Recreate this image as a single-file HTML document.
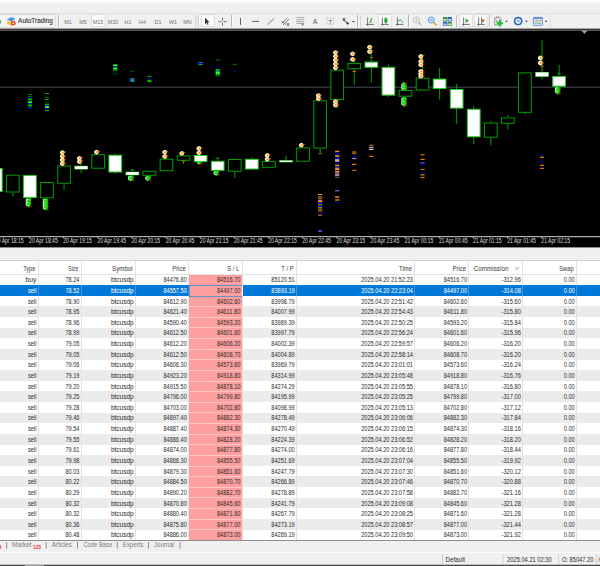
<!DOCTYPE html>
<html lang="en"><head><meta charset="utf-8"><title>Terminal</title>
<style>
html,body{margin:0;padding:0}
body{width:600px;height:566px;background:#f0f0f0;overflow:hidden;position:relative;font-family:"Liberation Sans", sans-serif;-webkit-font-smoothing:antialiased}
.topwhite{position:absolute;left:0;top:0;width:600px;height:2px;background:#fff;border-bottom:1px solid #f8f8f8}
.tbline{position:absolute;left:0;top:12.8px;width:600px;height:0.8px;background:#dedede}
.chartborder{position:absolute;left:0;top:27.9px;width:600px;height:0.9px;background:#a4a4a4}
.chartborder2{position:absolute;left:0;top:28.8px;width:600px;height:1.4px;background:#3a3a3a}
.chartbot{position:absolute;left:0;top:247.3px;width:600px;height:1.1px;background:#8e8e8e}
.hdrline{position:absolute;left:0;top:259.9px;width:600px;height:0.7px;background:#cfcfcf}
.tbl .row{position:absolute;left:0;width:600px}
.tbl .pink{position:absolute;background:#ffa0a0}
.tbl .vsep{position:absolute;top:0;width:1px;height:100%;background:#e2e2e2}
.tabs{position:absolute;left:0;top:540.4px;width:600px;height:11.8px;background:#f0f0f0;border-top:0.8px solid #8e8e8e;overflow:hidden}
.status{position:absolute;left:0;top:552.2px;width:600px;height:12.6px;background:#f0f0f0;border-top:0.8px solid #fcfcfc;overflow:hidden}
.botline{position:absolute;left:0;top:564px;width:600px;height:1px;background:#4a4a4a;border-top:1px solid #c0c0c0}
.botseg{position:absolute;left:25px;top:565px;width:19px;height:1px;background:#9a9a9a}
</style></head><body>
<div class="topwhite"></div>
<div class="tbline"></div>
<svg width="600" height="30" viewBox="0 0 600 30" style="position:absolute;left:0;top:0;display:block">
<rect x="-2" y="14.4" width="57.2" height="13" fill="#f4f4f4" stroke="#cfcfcf" stroke-width="0.7"/>
<rect x="0" y="20" width="1" height="3.4" fill="#48a868"/>
<path d="M7.3 20.2 L11.3 22 L11.3 25.8 L7.3 24 Z" fill="#f2c436"/>
<path d="M11.3 22 L14.9 20.2 L14.9 23.8 L11.3 25.8 Z" fill="#dca41e"/>
<path d="M7 19.2 L11.1 16.7 L15.3 18.5 L11.3 21.4 Z" fill="#3c88d8"/>
<path d="M8.4 19 L11.1 17.5 L13.4 18.4" fill="none" stroke="#a8d8ff" stroke-width="0.8"/>
<circle cx="13.3" cy="23.3" r="2.3" fill="#e23a22"/>
<rect x="12.5" y="22.6" width="1.6" height="1.5" fill="#fff"/>
<text x="18.1" y="23.0" font-size="6.6" fill="#3c3c3c" stroke="#3c3c3c" stroke-width="0.15" textLength="34.8" lengthAdjust="spacingAndGlyphs">AutoTrading</text>
<rect x="58.20" y="15" width="0.9" height="12" fill="#a8a8a8"/>
<rect x="59.10" y="15" width="0.8" height="12" fill="#ffffff"/>
<rect x="91.4" y="14.8" width="13.6" height="12" fill="#fbfbfb" stroke="#cacaca" stroke-width="0.5"/>
<text x="68" y="23.7" font-size="5.4" fill="#707070" text-anchor="middle">M1</text>
<text x="83" y="23.7" font-size="5.4" fill="#707070" text-anchor="middle">M5</text>
<text x="98" y="23.7" font-size="5.4" fill="#707070" text-anchor="middle">M15</text>
<text x="113" y="23.7" font-size="5.4" fill="#707070" text-anchor="middle">M30</text>
<text x="128" y="23.7" font-size="5.4" fill="#707070" text-anchor="middle">H1</text>
<text x="142.5" y="23.7" font-size="5.4" fill="#707070" text-anchor="middle">H4</text>
<text x="158" y="23.7" font-size="5.4" fill="#707070" text-anchor="middle">D1</text>
<text x="173" y="23.7" font-size="5.4" fill="#707070" text-anchor="middle">W1</text>
<text x="187.5" y="23.7" font-size="5.4" fill="#707070" text-anchor="middle">MN</text>
<rect x="195.4" y="15" width="0.8" height="12" fill="#c8c8c8"/>
<rect x="197.80" y="15" width="0.9" height="12" fill="#a8a8a8"/>
<rect x="198.70" y="15" width="0.8" height="12" fill="#ffffff"/>
<rect x="201.4" y="14.8" width="12.8" height="12" fill="#fbfbfb" stroke="#cacaca" stroke-width="0.5"/>
<path d="M205 17.8 L205 24.2 L206.6 22.8 L207.6 25 L208.5 24.6 L207.5 22.5 L209.4 22.3 Z" fill="#303030"/>
<path d="M222.5 17.8 V20.7 M222.5 22.7 V25.6 M218.4 21.7 H221.5 M223.5 21.7 H226.6" stroke="#484848" stroke-width="0.75" fill="none"/>
<rect x="231.00" y="15" width="0.9" height="12" fill="#a8a8a8"/>
<rect x="231.90" y="15" width="0.8" height="12" fill="#ffffff"/>
<path d="M240.5 18 V24.8" stroke="#505050" stroke-width="0.9"/>
<path d="M252.2 21.4 H259.2" stroke="#505050" stroke-width="0.9"/>
<path d="M267.5 24.8 L274.2 18.2" stroke="#606060" stroke-width="0.8"/>
<path d="M281.5 23.5 L287.5 17.8 M283 25 L289 19.2 M281.8 21.2 L286 24.6" stroke="#606060" stroke-width="0.8" fill="none"/>
<text x="287" y="26.2" font-size="3.6" fill="#404040" font-weight="bold">E</text>
<path d="M296.3 17.6 H304.2 M296.3 19.7 H304.2 M296.3 21.7 H304.2 M296.3 23.4 H301.5" stroke="#8a8a8a" stroke-width="0.7" fill="none"/>
<text x="301.8" y="26.4" font-size="3.6" fill="#404040" font-weight="bold">F</text>
<text x="313.1" y="23.8" font-size="6.4" fill="#505050">A</text>
<rect x="327.2" y="18.2" width="6.2" height="6.2" fill="none" stroke="#9a9a9a" stroke-width="0.6" stroke-dasharray="0.8 0.8"/>
<text x="328.6" y="23.9" font-size="5.6" fill="#505050">T</text>
<path d="M342.6 19.2 L345.4 19.2 M344 17.8 L344 20.6 M343 20 L348.6 23.4 M346.2 23.4 H349 M347.6 22 V24.8" stroke="#404040" stroke-width="0.9" fill="none"/>
<path d="M352 21 H354.8 L353.4 22.5 Z" fill="#303030"/>
<rect x="357.10" y="15" width="0.9" height="12" fill="#a8a8a8"/>
<rect x="358.00" y="15" width="0.8" height="12" fill="#ffffff"/>
<rect x="359.9" y="15" width="0.8" height="12" fill="#c8c8c8"/>
<path d="M367.6 17.4 V25.6 M365.8 24.4 H373.8" stroke="#505050" stroke-width="0.8" fill="none"/>
<path d="M371 18.4 V22.8 M371 19 H372.4 M369.6 22 H371" stroke="#20a030" stroke-width="0.9" fill="none"/>
<rect x="378.4" y="14.8" width="12.8" height="12" fill="#fbfbfb" stroke="#cacaca" stroke-width="0.5"/>
<path d="M382.4 17.4 V25.6 M380.8 24.4 H388.8" stroke="#505050" stroke-width="0.8" fill="none"/>
<path d="M385.9 17 V24" stroke="#20a030" stroke-width="0.7"/>
<rect x="384.6" y="18.4" width="2.6" height="4.2" rx="0.6" fill="#28b038" stroke="#108020" stroke-width="0.4"/>
<path d="M397.4 17.4 V25.6 M395.8 24.4 H403.4" stroke="#505050" stroke-width="0.8" fill="none"/>
<path d="M397.8 21.8 Q400 17.6 403 22.6" stroke="#20a030" stroke-width="0.9" fill="none"/>
<rect x="408.10" y="15" width="0.9" height="12" fill="#a8a8a8"/>
<rect x="409.00" y="15" width="0.8" height="12" fill="#ffffff"/>
<circle cx="416.4" cy="20" r="3.0" fill="#f4f4f4" stroke="#b4b4b4" stroke-width="0.8"/>
<path d="M415 20 H417.8 M416.4 18.6 V21.4" stroke="#b0b0b0" stroke-width="0.6"/>
<path d="M418.6 22.3 L421.2 25" stroke="#b0b0b0" stroke-width="1.3"/>
<circle cx="431.2" cy="20" r="3.0" fill="#cfe6ff" stroke="#5aa0e4" stroke-width="1"/>
<path d="M429.7 20 H432.7" stroke="#3070c0" stroke-width="0.7"/>
<path d="M433.6 22.4 L436.4 25.2" stroke="#d4a428" stroke-width="1.5"/>
<rect x="443" y="17" width="4.2" height="4.2" fill="#3a9a3a"/>
<rect x="447.6" y="17" width="4.2" height="4.2" fill="#2a60c8"/>
<rect x="443" y="21.6" width="4.2" height="4.2" fill="#2a60c8"/>
<rect x="447.6" y="21.6" width="4.2" height="4.2" fill="#3a9a3a"/>
<rect x="443.7" y="19" width="2.8" height="1.6" fill="#d4f0d0"/><rect x="448.3" y="19" width="2.8" height="1.6" fill="#d0e0ff"/><rect x="443.7" y="23.6" width="2.8" height="1.6" fill="#d0e0ff"/><rect x="448.3" y="23.6" width="2.8" height="1.6" fill="#d4f0d0"/>
<rect x="456.30" y="15" width="0.9" height="12" fill="#a8a8a8"/>
<rect x="457.20" y="15" width="0.8" height="12" fill="#ffffff"/>
<rect x="459.8" y="14.8" width="12.7" height="12" fill="#fbfbfb" stroke="#cacaca" stroke-width="0.5"/>
<path d="M463.6 17.4 V25.6 M462 24.4 H469.8" stroke="#505050" stroke-width="0.8" fill="none"/>
<path d="M465.6 18.6 L468.8 20.8 L465.6 23 Z" fill="#28a838"/>
<rect x="474.3" y="14.8" width="12.7" height="12" fill="#fbfbfb" stroke="#cacaca" stroke-width="0.5"/>
<path d="M478.6 17.4 V25.6 M477 24.4 H485 M481.6 17.4 V24.4" stroke="#505050" stroke-width="0.8" fill="none"/>
<rect x="482.2" y="19.4" width="2" height="2.6" fill="#d85020"/>
<rect x="489.30" y="15" width="0.9" height="12" fill="#a8a8a8"/>
<rect x="490.20" y="15" width="0.8" height="12" fill="#ffffff"/>
<path d="M496.4 16.8 H500 L501.2 18 V23.6 H496.4 Z" fill="#f4f4f4" stroke="#808080" stroke-width="0.6"/>
<path d="M494.8 18 H498.6 L499.8 19.2 V25 H494.8 Z" fill="#fcfcfc" stroke="#606060" stroke-width="0.7"/>
<path d="M496 20.4 L497.2 20.4 L497.2 22.4 M496 22.4 H498.4" stroke="#505050" stroke-width="0.6" fill="none"/>
<path d="M499.9 20.2 V26.6 M496.9 23.4 H502.9" stroke="#1cc430" stroke-width="2.3"/>
<path d="M505 20.8 H507.8 L506.4 22.3 Z" fill="#303030"/>
<circle cx="518.2" cy="21.1" r="4.0" fill="#2c6ccc" stroke="#1f57ae" stroke-width="0.7"/>
<circle cx="518.2" cy="21.1" r="2.8" fill="#d4e6fa"/>
<path d="M517 19.6 L518.4 21.2 H520" stroke="#404858" stroke-width="0.6" fill="none"/>
<path d="M525 20.8 H527.8 L526.4 22.3 Z" fill="#303030"/>
<rect x="533.4" y="17.4" width="9" height="8" rx="0.8" fill="#e2edf9" stroke="#5a8fd6" stroke-width="0.9"/>
<rect x="533.4" y="17.4" width="9" height="1.6" fill="#5a8fd6"/>
<path d="M534.8 21.6 L537 20.4 L539 21.2 L541.2 20.2" stroke="#d05030" stroke-width="0.7" fill="none"/>
<path d="M534.8 23.8 L537 22.8 L539 23.6 L541.2 22.8" stroke="#30a040" stroke-width="0.7" fill="none"/>
<path d="M544.8 20.8 H547.6 L546.2 22.3 Z" fill="#303030"/>
<rect x="550" y="14" width="0.7" height="15" fill="#dcdcdc"/>
</svg>
<div class="chartborder"></div><div class="chartborder2"></div>
<svg class="chart" width="600" height="218.0" viewBox="0 0 600 218.0" style="position:absolute;left:0;top:30.0px;display:block">
<rect x="0" y="0" width="600" height="218.0" fill="#000"/>
<rect x="0" y="0" width="600" height="0.8" fill="#6a6a6a"/>
<rect x="0" y="56.70" width="600" height="1" fill="#454b54"/>
<polygon points="581.2,0.5 587.8,0.5 584.5,3.700000000000003" fill="#98a4b2"/>
<rect x="27.82" y="64.00" width="4.2" height="1.0" fill="#007800"/>
<rect x="27.82" y="66.10" width="4.2" height="1.0" fill="#007800"/>
<rect x="27.82" y="67.10" width="4.2" height="1.0" fill="#0000a0"/>
<rect x="27.82" y="68.40" width="4.2" height="1.6" fill="#00b400"/>
<rect x="27.82" y="70.50" width="4.2" height="1.0" fill="#007800"/>
<rect x="27.82" y="71.40" width="4.2" height="1.8" fill="#20ff40"/>
<rect x="27.82" y="73.30" width="4.2" height="1.0" fill="#0000ff"/>
<rect x="27.82" y="74.40" width="4.2" height="1.6" fill="#00b400"/>
<rect x="27.82" y="76.50" width="4.2" height="1.0" fill="#00b400"/>
<rect x="27.82" y="77.40" width="4.2" height="1.0" fill="#0000ff"/>
<rect x="44.89" y="63.00" width="4.2" height="1.0" fill="#00b400"/>
<rect x="44.89" y="66.80" width="4.2" height="1.0" fill="#007800"/>
<rect x="44.89" y="69.00" width="4.2" height="1.0" fill="#00b400"/>
<rect x="44.89" y="72.25" width="4.2" height="1.5" fill="#004c00"/>
<rect x="44.89" y="74.00" width="4.2" height="1.0" fill="#00b400"/>
<rect x="44.89" y="75.00" width="4.2" height="1.0" fill="#0000ff"/>
<rect x="44.89" y="76.10" width="4.2" height="1.8" fill="#20ff40"/>
<rect x="44.89" y="78.10" width="4.2" height="1.0" fill="#0000ff"/>
<rect x="44.89" y="80.10" width="4.2" height="1.0" fill="#00b400"/>
<rect x="113.17" y="34.40" width="4.2" height="1.6" fill="#20ff40"/>
<rect x="113.17" y="36.50" width="4.2" height="1.0" fill="#0090c0"/>
<rect x="113.17" y="37.75" width="4.2" height="1.5" fill="#20ff40"/>
<rect x="113.17" y="39.20" width="4.2" height="1.6" fill="#00b400"/>
<rect x="113.17" y="43.20" width="4.2" height="1.0" fill="#006000"/>
<rect x="130.24" y="40.70" width="4.2" height="1.0" fill="#006800"/>
<rect x="130.24" y="48.30" width="4.2" height="1.4" fill="#10a0c0"/>
<rect x="130.24" y="49.60" width="4.2" height="1.4" fill="#1080e0"/>
<rect x="130.24" y="50.90" width="4.2" height="1.0" fill="#10a060"/>
<rect x="147.31" y="45.90" width="4.2" height="1.0" fill="#00b400"/>
<rect x="147.31" y="48.20" width="4.2" height="1.0" fill="#0000ff"/>
<rect x="147.31" y="49.80" width="4.2" height="1.2" fill="#00b400"/>
<rect x="147.31" y="50.90" width="4.2" height="1.2" fill="#00b400"/>
<rect x="198.52" y="32.10" width="4.2" height="1.0" fill="#10b060"/>
<rect x="198.52" y="32.90" width="4.2" height="1.2" fill="#0000ff"/>
<rect x="198.52" y="34.00" width="4.2" height="1.0" fill="#10a040"/>
<rect x="215.59" y="29.30" width="4.2" height="1.4" fill="#005800"/>
<rect x="215.59" y="36.90" width="4.2" height="1.0" fill="#0000a0"/>
<rect x="215.59" y="39.00" width="4.2" height="1.4" fill="#00b400"/>
<rect x="215.59" y="40.40" width="4.2" height="1.2" fill="#20c060"/>
<rect x="215.59" y="41.60" width="4.2" height="1.6" fill="#20ff40"/>
<rect x="215.59" y="43.10" width="4.2" height="1.4" fill="#20ff40"/>
<rect x="215.59" y="44.50" width="4.2" height="1.0" fill="#00b400"/>
<rect x="215.59" y="45.80" width="4.2" height="1.0" fill="#006000"/>
<rect x="232.66" y="33.80" width="4.2" height="1.0" fill="#008000"/>
<rect x="232.66" y="40.70" width="4.2" height="1.0" fill="#000090"/>
<rect x="318.01" y="164.00" width="4.2" height="1.0" fill="#ff9800"/>
<rect x="318.01" y="166.30" width="4.2" height="1.4" fill="#9c5a14"/>
<rect x="318.01" y="167.90" width="4.2" height="1.4" fill="#9c5a14"/>
<rect x="318.01" y="169.90" width="4.2" height="1.0" fill="#e08000"/>
<rect x="318.01" y="170.90" width="4.2" height="1.4" fill="#ff9800"/>
<rect x="318.01" y="172.50" width="4.2" height="1.4" fill="#0000ff"/>
<rect x="318.01" y="174.30" width="4.2" height="1.0" fill="#ff9800"/>
<rect x="318.01" y="175.70" width="4.2" height="1.4" fill="#0000ff"/>
<rect x="318.01" y="177.30" width="4.2" height="1.0" fill="#ff9800"/>
<rect x="318.01" y="178.70" width="4.2" height="1.4" fill="#9c5a14"/>
<rect x="318.01" y="180.30" width="4.2" height="1.4" fill="#9c5a14"/>
<rect x="318.01" y="182.70" width="4.2" height="1.4" fill="#0000a0"/>
<rect x="318.01" y="184.50" width="4.2" height="1.4" fill="#9c5a14"/>
<rect x="318.01" y="200.10" width="4.2" height="1.8" fill="#6a40c8"/>
<rect x="335.08" y="120.80" width="4.2" height="1.4" fill="#ff9800"/>
<rect x="335.08" y="122.40" width="4.2" height="1.6" fill="#0000a0"/>
<rect x="335.08" y="124.10" width="4.2" height="1.0" fill="#0000a0"/>
<rect x="335.08" y="125.20" width="4.2" height="1.6" fill="#ff9800"/>
<rect x="335.08" y="127.30" width="4.2" height="1.4" fill="#0000ff"/>
<rect x="335.08" y="128.90" width="4.2" height="1.0" fill="#b090e0"/>
<rect x="335.08" y="129.90" width="4.2" height="1.0" fill="#ffc0a0"/>
<rect x="335.08" y="130.90" width="4.2" height="1.0" fill="#b090e0"/>
<rect x="335.08" y="132.70" width="4.2" height="1.4" fill="#0000a0"/>
<rect x="335.08" y="134.70" width="4.2" height="1.6" fill="#ff9800"/>
<rect x="335.08" y="136.50" width="4.2" height="1.0" fill="#0000ff"/>
<rect x="335.08" y="137.70" width="4.2" height="1.0" fill="#ffc0a0"/>
<rect x="335.08" y="138.90" width="4.2" height="1.2" fill="#ff9800"/>
<rect x="335.08" y="140.90" width="4.2" height="1.2" fill="#ff9800"/>
<rect x="335.08" y="142.30" width="4.2" height="1.0" fill="#b090e0"/>
<rect x="335.08" y="143.70" width="4.2" height="1.0" fill="#ffc0a0"/>
<rect x="335.08" y="144.90" width="4.2" height="1.0" fill="#b090e0"/>
<rect x="335.08" y="146.70" width="4.2" height="1.0" fill="#8060a0"/>
<rect x="335.08" y="160.00" width="4.2" height="1.4" fill="#7060d0"/>
<rect x="335.08" y="166.30" width="4.2" height="1.4" fill="#ff9800"/>
<rect x="335.08" y="169.30" width="4.2" height="1.4" fill="#e08000"/>
<rect x="335.08" y="171.80" width="4.2" height="1.2" fill="#0000a0"/>
<rect x="352.15" y="121.20" width="4.2" height="1.6" fill="#9c5a14"/>
<rect x="352.15" y="122.80" width="4.2" height="1.4" fill="#9c5a14"/>
<rect x="352.15" y="125.80" width="4.2" height="1.4" fill="#0000a0"/>
<rect x="352.15" y="127.90" width="4.2" height="1.2" fill="#b090e0"/>
<rect x="352.15" y="133.80" width="4.2" height="1.2" fill="#e08000"/>
<rect x="352.15" y="139.80" width="4.2" height="1.2" fill="#b86c10"/>
<rect x="369.22" y="114.60" width="4.2" height="1.4" fill="#9c5a14"/>
<rect x="369.22" y="116.70" width="4.2" height="1.4" fill="#b090e0"/>
<rect x="369.22" y="118.80" width="4.2" height="1.2" fill="#ffc0a0"/>
<rect x="369.22" y="125.80" width="4.2" height="1.2" fill="#e08000"/>
<rect x="420.43" y="124.10" width="4.2" height="1.2" fill="#b87010"/>
<rect x="420.43" y="128.80" width="4.2" height="1.2" fill="#e08000"/>
<rect x="420.43" y="132.40" width="4.2" height="1.2" fill="#8070ff"/>
<rect x="420.43" y="133.40" width="4.2" height="1.0" fill="#0000ff"/>
<rect x="420.43" y="138.90" width="4.2" height="1.2" fill="#c07810"/>
<rect x="420.43" y="141.90" width="4.2" height="1.2" fill="#0000a0"/>
<rect x="420.43" y="144.10" width="4.2" height="1.4" fill="#c07810"/>
<rect x="420.43" y="146.90" width="4.2" height="1.2" fill="#e08000"/>
<rect x="539.92" y="124.90" width="4.2" height="1.2" fill="#0000a0"/>
<rect x="539.92" y="126.70" width="4.2" height="1.2" fill="#e08000"/>
<rect x="539.92" y="130.90" width="4.2" height="1.2" fill="#0000a0"/>
<rect x="539.92" y="134.70" width="4.2" height="1.2" fill="#e08000"/>
<rect x="539.92" y="137.80" width="4.2" height="1.2" fill="#c07810"/>
<rect x="-10.57" y="138.50" width="12.7" height="23.00" fill="#fff" stroke="#22d022" stroke-width="1"/>
<rect x="12.35" y="162.50" width="1" height="4.20" fill="#00a000"/>
<rect x="6.50" y="145.20" width="12.7" height="16.80" fill="#000" stroke="#00a000" stroke-width="1"/>
<rect x="23.57" y="145.50" width="12.7" height="22.00" fill="#fff" stroke="#22d022" stroke-width="1"/>
<rect x="40.64" y="152.50" width="12.7" height="15.30" fill="#000" stroke="#00a000" stroke-width="1"/>
<rect x="63.56" y="153.80" width="1" height="5.90" fill="#00a000"/>
<rect x="57.71" y="136.00" width="12.7" height="17.30" fill="#000" stroke="#00a000" stroke-width="1"/>
<rect x="80.63" y="133.00" width="1" height="2.80" fill="#00a000"/>
<rect x="80.63" y="139.50" width="1" height="3.50" fill="#00a000"/>
<rect x="74.28" y="135.80" width="13.7" height="3.70" fill="#22d022"/>
<rect x="74.88" y="136.25" width="12.5" height="2.80" fill="#ffffff"/>
<rect x="91.85" y="124.70" width="12.7" height="13.50" fill="#000" stroke="#00a000" stroke-width="1"/>
<rect x="114.77" y="123.20" width="1" height="1.50" fill="#00a000"/>
<rect x="114.77" y="142.50" width="1" height="1.50" fill="#00a000"/>
<rect x="108.92" y="125.20" width="12.7" height="16.80" fill="#fff" stroke="#22d022" stroke-width="1"/>
<rect x="131.84" y="139.70" width="1" height="2.00" fill="#00a000"/>
<rect x="125.49" y="141.70" width="13.7" height="3.60" fill="#22d022"/>
<rect x="126.09" y="142.15" width="12.5" height="2.70" fill="#ffffff"/>
<rect x="143.06" y="141.30" width="12.7" height="4.00" fill="#000" stroke="#00a000" stroke-width="1"/>
<rect x="160.13" y="129.20" width="12.7" height="11.50" fill="#000" stroke="#00a000" stroke-width="1"/>
<rect x="183.05" y="130.80" width="1" height="3.20" fill="#00a000"/>
<rect x="177.20" y="125.80" width="12.7" height="4.50" fill="#000" stroke="#00a000" stroke-width="1"/>
<rect x="194.27" y="125.50" width="12.7" height="6.00" fill="#fff" stroke="#22d022" stroke-width="1"/>
<rect x="217.19" y="128.00" width="1" height="2.80" fill="#00a000"/>
<rect x="211.34" y="131.30" width="12.7" height="9.00" fill="#fff" stroke="#22d022" stroke-width="1"/>
<rect x="234.26" y="141.70" width="1" height="6.30" fill="#00a000"/>
<rect x="228.41" y="129.50" width="12.7" height="11.70" fill="#000" stroke="#00a000" stroke-width="1"/>
<rect x="251.33" y="127.30" width="1" height="1.50" fill="#00a000"/>
<rect x="245.48" y="129.30" width="12.7" height="9.70" fill="#fff" stroke="#22d022" stroke-width="1"/>
<rect x="262.55" y="131.50" width="12.7" height="5.70" fill="#000" stroke="#00a000" stroke-width="1"/>
<rect x="285.47" y="125.60" width="1" height="4.60" fill="#00a000"/>
<rect x="279.12" y="130.20" width="13.7" height="2.20" fill="#22d022"/>
<rect x="279.72" y="130.65" width="12.5" height="1.30" fill="#ffffff"/>
<rect x="296.69" y="117.90" width="12.7" height="13.30" fill="#000" stroke="#00a000" stroke-width="1"/>
<rect x="319.61" y="118.60" width="1" height="5.40" fill="#00a000"/>
<rect x="313.76" y="70.80" width="12.7" height="47.30" fill="#000" stroke="#00a000" stroke-width="1"/>
<rect x="336.68" y="70.00" width="1" height="8.40" fill="#00a000"/>
<rect x="330.83" y="40.20" width="12.7" height="29.30" fill="#000" stroke="#00a000" stroke-width="1"/>
<rect x="353.75" y="30.50" width="1" height="2.60" fill="#00a000"/>
<rect x="353.75" y="39.30" width="1" height="15.40" fill="#00a000"/>
<rect x="347.90" y="33.60" width="12.7" height="5.20" fill="#000" stroke="#00a000" stroke-width="1"/>
<rect x="370.82" y="15.50" width="1" height="16.10" fill="#00a000"/>
<rect x="370.82" y="37.70" width="1" height="14.80" fill="#00a000"/>
<rect x="364.97" y="32.10" width="12.7" height="5.10" fill="#fff" stroke="#22d022" stroke-width="1"/>
<rect x="387.89" y="34.20" width="1" height="2.70" fill="#00a000"/>
<rect x="387.89" y="65.60" width="1" height="1.40" fill="#00a000"/>
<rect x="382.04" y="37.40" width="12.7" height="27.70" fill="#fff" stroke="#22d022" stroke-width="1"/>
<rect x="399.11" y="60.50" width="12.7" height="5.70" fill="#000" stroke="#00a000" stroke-width="1"/>
<rect x="422.03" y="24.30" width="1" height="23.40" fill="#00a000"/>
<rect x="416.18" y="48.20" width="12.7" height="11.80" fill="#000" stroke="#00a000" stroke-width="1"/>
<rect x="439.10" y="38.00" width="1" height="10.60" fill="#00a000"/>
<rect x="439.10" y="59.00" width="1" height="10.50" fill="#00a000"/>
<rect x="433.25" y="49.10" width="12.7" height="9.40" fill="#fff" stroke="#22d022" stroke-width="1"/>
<rect x="456.17" y="54.00" width="1" height="5.00" fill="#00a000"/>
<rect x="456.17" y="78.60" width="1" height="15.20" fill="#00a000"/>
<rect x="450.32" y="59.50" width="12.7" height="18.60" fill="#fff" stroke="#22d022" stroke-width="1"/>
<rect x="473.24" y="75.50" width="1" height="3.30" fill="#00a000"/>
<rect x="473.24" y="107.30" width="1" height="7.00" fill="#00a000"/>
<rect x="467.39" y="79.30" width="12.7" height="27.50" fill="#fff" stroke="#22d022" stroke-width="1"/>
<rect x="490.31" y="91.00" width="1" height="1.50" fill="#00a000"/>
<rect x="490.31" y="107.70" width="1" height="7.50" fill="#00a000"/>
<rect x="484.46" y="93.00" width="12.7" height="14.20" fill="#000" stroke="#00a000" stroke-width="1"/>
<rect x="507.38" y="85.00" width="1" height="2.40" fill="#00a000"/>
<rect x="507.38" y="93.80" width="1" height="5.50" fill="#00a000"/>
<rect x="501.53" y="87.90" width="12.7" height="5.40" fill="#000" stroke="#00a000" stroke-width="1"/>
<rect x="524.45" y="82.80" width="1" height="1.40" fill="#00a000"/>
<rect x="518.60" y="42.90" width="12.7" height="39.40" fill="#000" stroke="#00a000" stroke-width="1"/>
<rect x="541.52" y="10.00" width="1" height="32.00" fill="#00a000"/>
<rect x="541.52" y="46.80" width="1" height="2.90" fill="#00a000"/>
<rect x="535.17" y="42.00" width="13.7" height="4.80" fill="#22d022"/>
<rect x="535.77" y="42.45" width="12.5" height="3.90" fill="#ffffff"/>
<rect x="558.59" y="34.90" width="1" height="11.10" fill="#00a000"/>
<rect x="552.74" y="46.50" width="12.7" height="9.70" fill="#fff" stroke="#22d022" stroke-width="1"/>
<rect x="130.64" y="139.30" width="3.4" height="1.0" fill="#00a000"/>
<rect x="215.99" y="127.70" width="3.4" height="1.0" fill="#00a000"/>
<rect x="181.85" y="130.50" width="3.4" height="1.0" fill="#c08000"/>
<rect x="318.41" y="123.10" width="3.4" height="1.0" fill="#a06000"/>
<rect x="352.55" y="41.00" width="3.4" height="1.0" fill="#c07800"/>
<rect x="369.62" y="27.10" width="3.4" height="1.0" fill="#a06000"/>
<rect x="353.05" y="29.90" width="2.4" height="1.0" fill="#408000"/>
<polygon points="59.96,122.62 61.06,120.72 62.46,120.22 63.86,120.72 64.86,122.62 63.86,124.53 62.46,125.03 61.06,124.53" fill="#ffe6b4"/>
<polygon points="59.96,126.28 61.06,124.38 62.46,123.88 63.86,124.38 64.86,126.28 63.86,128.18 62.46,128.68 61.06,128.18" fill="#ffe6b4"/>
<polygon points="59.96,129.93 61.06,128.03 62.46,127.53 63.86,128.03 64.86,129.93 63.86,131.83 62.46,132.33 61.06,131.83" fill="#ffe6b4"/>
<polygon points="59.96,133.58 61.06,131.68 62.46,131.18 63.86,131.68 64.86,133.58 63.86,135.48 62.46,135.98 61.06,135.48" fill="#ffe6b4"/>
<rect x="60.06" y="121.42" width="1.2" height="2.4" fill="#ffffff" opacity="0.8"/>
<ellipse cx="62.76" cy="122.62" rx="1.15" ry="1.0" fill="#ff9a18"/>
<rect x="64.26" y="121.42" width="1.7" height="0.7" fill="#e88810" opacity="0.85"/>
<rect x="60.06" y="125.08" width="1.2" height="2.4" fill="#ffffff" opacity="0.8"/>
<ellipse cx="62.76" cy="126.28" rx="1.15" ry="1.0" fill="#ff9a18"/>
<rect x="64.26" y="125.08" width="1.7" height="0.7" fill="#e88810" opacity="0.85"/>
<rect x="64.66" y="126.38" width="1.1" height="1.0" fill="#e02000"/>
<rect x="60.06" y="128.73" width="1.2" height="2.4" fill="#ffffff" opacity="0.8"/>
<ellipse cx="62.76" cy="129.93" rx="1.15" ry="1.0" fill="#ff9a18"/>
<rect x="64.26" y="128.73" width="1.7" height="0.7" fill="#e88810" opacity="0.85"/>
<rect x="63.06" y="130.83" width="1.4" height="0.9" fill="#a0d040"/>
<rect x="60.06" y="132.38" width="1.2" height="2.4" fill="#ffffff" opacity="0.8"/>
<ellipse cx="62.76" cy="133.58" rx="1.15" ry="1.0" fill="#ff9a18"/>
<rect x="64.26" y="132.38" width="1.7" height="0.7" fill="#e88810" opacity="0.85"/>
<rect x="64.66" y="133.68" width="1.1" height="1.0" fill="#e02000"/>
<polygon points="77.03,128.32 78.13,126.42 79.53,125.92 80.93,126.42 81.93,128.32 80.93,130.22 79.53,130.72 78.13,130.22" fill="#ffe6b4"/>
<polygon points="77.03,131.57 78.13,129.67 79.53,129.17 80.93,129.67 81.93,131.57 80.93,133.47 79.53,133.97 78.13,133.47" fill="#ffe6b4"/>
<rect x="77.13" y="127.12" width="1.2" height="2.4" fill="#ffffff" opacity="0.8"/>
<ellipse cx="79.83" cy="128.32" rx="1.15" ry="1.0" fill="#ff9a18"/>
<rect x="81.33" y="127.12" width="1.7" height="0.7" fill="#e88810" opacity="0.85"/>
<rect x="77.13" y="130.38" width="1.2" height="2.4" fill="#ffffff" opacity="0.8"/>
<ellipse cx="79.83" cy="131.57" rx="1.15" ry="1.0" fill="#ff9a18"/>
<rect x="81.33" y="130.38" width="1.7" height="0.7" fill="#e88810" opacity="0.85"/>
<rect x="81.73" y="131.67" width="1.1" height="1.0" fill="#e02000"/>
<polygon points="94.10,122.10 95.20,120.20 96.60,119.70 98.00,120.20 99.00,122.10 98.00,124.00 96.60,124.50 95.20,124.00" fill="#ffe6b4"/>
<rect x="94.20" y="120.90" width="1.2" height="2.4" fill="#ffffff" opacity="0.8"/>
<ellipse cx="96.90" cy="122.10" rx="1.15" ry="1.0" fill="#ff9a18"/>
<rect x="98.40" y="120.90" width="1.7" height="0.7" fill="#e88810" opacity="0.85"/>
<polygon points="162.38,122.18 163.48,120.28 164.88,119.78 166.28,120.28 167.28,122.18 166.28,124.08 164.88,124.58 163.48,124.08" fill="#ffe6b4"/>
<polygon points="162.38,126.52 163.48,124.62 164.88,124.12 166.28,124.62 167.28,126.52 166.28,128.42 164.88,128.92 163.48,128.42" fill="#ffe6b4"/>
<rect x="162.48" y="120.98" width="1.2" height="2.4" fill="#ffffff" opacity="0.8"/>
<ellipse cx="165.18" cy="122.18" rx="1.15" ry="1.0" fill="#ff9a18"/>
<rect x="166.68" y="120.98" width="1.7" height="0.7" fill="#e88810" opacity="0.85"/>
<rect x="162.48" y="125.32" width="1.2" height="2.4" fill="#ffffff" opacity="0.8"/>
<ellipse cx="165.18" cy="126.52" rx="1.15" ry="1.0" fill="#ff9a18"/>
<rect x="166.68" y="125.32" width="1.7" height="0.7" fill="#e88810" opacity="0.85"/>
<rect x="167.08" y="126.62" width="1.1" height="1.0" fill="#e02000"/>
<polygon points="179.45,123.30 180.55,121.40 181.95,120.90 183.35,121.40 184.35,123.30 183.35,125.20 181.95,125.70 180.55,125.20" fill="#ffe6b4"/>
<rect x="179.55" y="122.10" width="1.2" height="2.4" fill="#ffffff" opacity="0.8"/>
<ellipse cx="182.25" cy="123.30" rx="1.15" ry="1.0" fill="#ff9a18"/>
<rect x="183.75" y="122.10" width="1.7" height="0.7" fill="#e88810" opacity="0.85"/>
<polygon points="196.52,118.48 197.62,116.58 199.02,116.08 200.42,116.58 201.42,118.48 200.42,120.38 199.02,120.88 197.62,120.38" fill="#ffe6b4"/>
<polygon points="196.52,122.82 197.62,120.92 199.02,120.42 200.42,120.92 201.42,122.82 200.42,124.72 199.02,125.22 197.62,124.72" fill="#ffe6b4"/>
<rect x="196.62" y="117.28" width="1.2" height="2.4" fill="#ffffff" opacity="0.8"/>
<ellipse cx="199.32" cy="118.48" rx="1.15" ry="1.0" fill="#ff9a18"/>
<rect x="200.82" y="117.28" width="1.7" height="0.7" fill="#e88810" opacity="0.85"/>
<rect x="196.62" y="121.62" width="1.2" height="2.4" fill="#ffffff" opacity="0.8"/>
<ellipse cx="199.32" cy="122.82" rx="1.15" ry="1.0" fill="#ff9a18"/>
<rect x="200.82" y="121.62" width="1.7" height="0.7" fill="#e88810" opacity="0.85"/>
<rect x="201.22" y="122.92" width="1.1" height="1.0" fill="#e02000"/>
<polygon points="264.80,125.52 265.90,123.62 267.30,123.12 268.70,123.62 269.70,125.52 268.70,127.42 267.30,127.92 265.90,127.42" fill="#ffe6b4"/>
<polygon points="264.80,129.18 265.90,127.28 267.30,126.78 268.70,127.28 269.70,129.18 268.70,131.08 267.30,131.58 265.90,131.08" fill="#ffe6b4"/>
<rect x="264.90" y="124.32" width="1.2" height="2.4" fill="#ffffff" opacity="0.8"/>
<ellipse cx="267.60" cy="125.52" rx="1.15" ry="1.0" fill="#ff9a18"/>
<rect x="269.10" y="124.32" width="1.7" height="0.7" fill="#e88810" opacity="0.85"/>
<rect x="264.90" y="127.98" width="1.2" height="2.4" fill="#ffffff" opacity="0.8"/>
<ellipse cx="267.60" cy="129.18" rx="1.15" ry="1.0" fill="#ff9a18"/>
<rect x="269.10" y="127.98" width="1.7" height="0.7" fill="#e88810" opacity="0.85"/>
<rect x="269.50" y="129.28" width="1.1" height="1.0" fill="#e02000"/>
<polygon points="298.94,115.20 300.04,113.30 301.44,112.80 302.84,113.30 303.84,115.20 302.84,117.10 301.44,117.60 300.04,117.10" fill="#ffe6b4"/>
<rect x="299.04" y="114.00" width="1.2" height="2.4" fill="#ffffff" opacity="0.8"/>
<ellipse cx="301.74" cy="115.20" rx="1.15" ry="1.0" fill="#ff9a18"/>
<rect x="303.24" y="114.00" width="1.7" height="0.7" fill="#e88810" opacity="0.85"/>
<polygon points="316.01,65.58 317.11,63.68 318.51,63.18 319.91,63.68 320.91,65.58 319.91,67.48 318.51,67.98 317.11,67.48" fill="#ffe6b4"/>
<polygon points="316.01,68.72 317.11,66.82 318.51,66.32 319.91,66.82 320.91,68.72 319.91,70.62 318.51,71.12 317.11,70.62" fill="#ffe6b4"/>
<rect x="316.11" y="64.38" width="1.2" height="2.4" fill="#ffffff" opacity="0.8"/>
<ellipse cx="318.81" cy="65.58" rx="1.15" ry="1.0" fill="#ff9a18"/>
<rect x="320.31" y="64.38" width="1.7" height="0.7" fill="#e88810" opacity="0.85"/>
<rect x="316.11" y="67.52" width="1.2" height="2.4" fill="#ffffff" opacity="0.8"/>
<ellipse cx="318.81" cy="68.72" rx="1.15" ry="1.0" fill="#ff9a18"/>
<rect x="320.31" y="67.52" width="1.7" height="0.7" fill="#e88810" opacity="0.85"/>
<rect x="320.71" y="68.82" width="1.1" height="1.0" fill="#e02000"/>
<polygon points="333.08,22.60 334.18,20.70 335.58,20.20 336.98,20.70 337.98,22.60 336.98,24.50 335.58,25.00 334.18,24.50" fill="#ffe6b4"/>
<polygon points="333.08,26.40 334.18,24.50 335.58,24.00 336.98,24.50 337.98,26.40 336.98,28.30 335.58,28.80 334.18,28.30" fill="#ffe6b4"/>
<polygon points="333.08,30.20 334.18,28.30 335.58,27.80 336.98,28.30 337.98,30.20 336.98,32.10 335.58,32.60 334.18,32.10" fill="#ffe6b4"/>
<polygon points="333.08,34.00 334.18,32.10 335.58,31.60 336.98,32.10 337.98,34.00 336.98,35.90 335.58,36.40 334.18,35.90" fill="#ffe6b4"/>
<polygon points="333.08,37.80 334.18,35.90 335.58,35.40 336.98,35.90 337.98,37.80 336.98,39.70 335.58,40.20 334.18,39.70" fill="#ffe6b4"/>
<rect x="333.18" y="21.40" width="1.2" height="2.4" fill="#ffffff" opacity="0.8"/>
<ellipse cx="335.88" cy="22.60" rx="1.15" ry="1.0" fill="#ff9a18"/>
<rect x="337.38" y="21.40" width="1.7" height="0.7" fill="#e88810" opacity="0.85"/>
<rect x="333.18" y="25.20" width="1.2" height="2.4" fill="#ffffff" opacity="0.8"/>
<ellipse cx="335.88" cy="26.40" rx="1.15" ry="1.0" fill="#ff9a18"/>
<rect x="337.38" y="25.20" width="1.7" height="0.7" fill="#e88810" opacity="0.85"/>
<rect x="337.78" y="26.50" width="1.1" height="1.0" fill="#e02000"/>
<rect x="333.18" y="29.00" width="1.2" height="2.4" fill="#ffffff" opacity="0.8"/>
<ellipse cx="335.88" cy="30.20" rx="1.15" ry="1.0" fill="#ff9a18"/>
<rect x="337.38" y="29.00" width="1.7" height="0.7" fill="#e88810" opacity="0.85"/>
<rect x="336.18" y="31.10" width="1.4" height="0.9" fill="#a0d040"/>
<rect x="333.18" y="32.80" width="1.2" height="2.4" fill="#ffffff" opacity="0.8"/>
<ellipse cx="335.88" cy="34.00" rx="1.15" ry="1.0" fill="#ff9a18"/>
<rect x="337.38" y="32.80" width="1.7" height="0.7" fill="#e88810" opacity="0.85"/>
<rect x="337.78" y="34.10" width="1.1" height="1.0" fill="#e02000"/>
<rect x="333.18" y="36.60" width="1.2" height="2.4" fill="#ffffff" opacity="0.8"/>
<ellipse cx="335.88" cy="37.80" rx="1.15" ry="1.0" fill="#ff9a18"/>
<rect x="337.38" y="36.60" width="1.7" height="0.7" fill="#e88810" opacity="0.85"/>
<polygon points="333.08,71.80 334.18,69.90 335.58,69.40 336.98,69.90 337.98,71.80 336.98,73.70 335.58,74.20 334.18,73.70" fill="#ffe6b4"/>
<polygon points="333.08,75.00 334.18,73.10 335.58,72.60 336.98,73.10 337.98,75.00 336.98,76.90 335.58,77.40 334.18,76.90" fill="#ffe6b4"/>
<rect x="333.18" y="70.60" width="1.2" height="2.4" fill="#ffffff" opacity="0.8"/>
<ellipse cx="335.88" cy="71.80" rx="1.15" ry="1.0" fill="#ff9a18"/>
<rect x="337.38" y="70.60" width="1.7" height="0.7" fill="#e88810" opacity="0.85"/>
<rect x="333.18" y="73.80" width="1.2" height="2.4" fill="#ffffff" opacity="0.8"/>
<ellipse cx="335.88" cy="75.00" rx="1.15" ry="1.0" fill="#ff9a18"/>
<rect x="337.38" y="73.80" width="1.7" height="0.7" fill="#e88810" opacity="0.85"/>
<rect x="337.78" y="75.10" width="1.1" height="1.0" fill="#e02000"/>
<polygon points="350.15,23.80 351.25,21.90 352.65,21.40 354.05,21.90 355.05,23.80 354.05,25.70 352.65,26.20 351.25,25.70" fill="#ffe6b4"/>
<polygon points="350.15,29.40 351.25,27.50 352.65,27.00 354.05,27.50 355.05,29.40 354.05,31.30 352.65,31.80 351.25,31.30" fill="#ffe6b4"/>
<rect x="350.25" y="22.60" width="1.2" height="2.4" fill="#ffffff" opacity="0.8"/>
<ellipse cx="352.95" cy="23.80" rx="1.15" ry="1.0" fill="#ff9a18"/>
<rect x="354.45" y="22.60" width="1.7" height="0.7" fill="#e88810" opacity="0.85"/>
<rect x="350.25" y="28.20" width="1.2" height="2.4" fill="#ffffff" opacity="0.8"/>
<ellipse cx="352.95" cy="29.40" rx="1.15" ry="1.0" fill="#ff9a18"/>
<rect x="354.45" y="28.20" width="1.7" height="0.7" fill="#e88810" opacity="0.85"/>
<rect x="354.85" y="29.50" width="1.1" height="1.0" fill="#e02000"/>
<polygon points="367.22,17.20 368.32,15.30 369.72,14.80 371.12,15.30 372.12,17.20 371.12,19.10 369.72,19.60 368.32,19.10" fill="#ffe6b4"/>
<polygon points="367.22,21.60 368.32,19.70 369.72,19.20 371.12,19.70 372.12,21.60 371.12,23.50 369.72,24.00 368.32,23.50" fill="#ffe6b4"/>
<rect x="367.32" y="16.00" width="1.2" height="2.4" fill="#ffffff" opacity="0.8"/>
<ellipse cx="370.02" cy="17.20" rx="1.15" ry="1.0" fill="#ff9a18"/>
<rect x="371.52" y="16.00" width="1.7" height="0.7" fill="#e88810" opacity="0.85"/>
<rect x="367.32" y="20.40" width="1.2" height="2.4" fill="#ffffff" opacity="0.8"/>
<ellipse cx="370.02" cy="21.60" rx="1.15" ry="1.0" fill="#ff9a18"/>
<rect x="371.52" y="20.40" width="1.7" height="0.7" fill="#e88810" opacity="0.85"/>
<rect x="371.92" y="21.70" width="1.1" height="1.0" fill="#e02000"/>
<polygon points="418.43,26.50 419.53,24.60 420.93,24.10 422.33,24.60 423.33,26.50 422.33,28.40 420.93,28.90 419.53,28.40" fill="#ffe6b4"/>
<polygon points="418.43,31.40 419.53,29.50 420.93,29.00 422.33,29.50 423.33,31.40 422.33,33.30 420.93,33.80 419.53,33.30" fill="#ffe6b4"/>
<polygon points="418.43,34.90 419.53,33.00 420.93,32.50 422.33,33.00 423.33,34.90 422.33,36.80 420.93,37.30 419.53,36.80" fill="#ffe6b4"/>
<polygon points="418.43,41.30 419.53,39.40 420.93,38.90 422.33,39.40 423.33,41.30 422.33,43.20 420.93,43.70 419.53,43.20" fill="#ffe6b4"/>
<polygon points="418.43,43.80 419.53,41.90 420.93,41.40 422.33,41.90 423.33,43.80 422.33,45.70 420.93,46.20 419.53,45.70" fill="#ffe6b4"/>
<polygon points="418.43,46.20 419.53,44.30 420.93,43.80 422.33,44.30 423.33,46.20 422.33,48.10 420.93,48.60 419.53,48.10" fill="#ffe6b4"/>
<rect x="418.53" y="25.30" width="1.2" height="2.4" fill="#ffffff" opacity="0.8"/>
<ellipse cx="421.23" cy="26.50" rx="1.15" ry="1.0" fill="#ff9a18"/>
<rect x="422.73" y="25.30" width="1.7" height="0.7" fill="#e88810" opacity="0.85"/>
<rect x="418.53" y="30.20" width="1.2" height="2.4" fill="#ffffff" opacity="0.8"/>
<ellipse cx="421.23" cy="31.40" rx="1.15" ry="1.0" fill="#ff9a18"/>
<rect x="422.73" y="30.20" width="1.7" height="0.7" fill="#e88810" opacity="0.85"/>
<rect x="423.13" y="31.50" width="1.1" height="1.0" fill="#e02000"/>
<rect x="418.53" y="33.70" width="1.2" height="2.4" fill="#ffffff" opacity="0.8"/>
<ellipse cx="421.23" cy="34.90" rx="1.15" ry="1.0" fill="#ff9a18"/>
<rect x="422.73" y="33.70" width="1.7" height="0.7" fill="#e88810" opacity="0.85"/>
<rect x="421.53" y="35.80" width="1.4" height="0.9" fill="#a0d040"/>
<rect x="418.53" y="40.10" width="1.2" height="2.4" fill="#ffffff" opacity="0.8"/>
<ellipse cx="421.23" cy="41.30" rx="1.15" ry="1.0" fill="#ff9a18"/>
<rect x="422.73" y="40.10" width="1.7" height="0.7" fill="#e88810" opacity="0.85"/>
<rect x="423.13" y="41.40" width="1.1" height="1.0" fill="#e02000"/>
<rect x="418.53" y="42.60" width="1.2" height="2.4" fill="#ffffff" opacity="0.8"/>
<ellipse cx="421.23" cy="43.80" rx="1.15" ry="1.0" fill="#ff9a18"/>
<rect x="422.73" y="42.60" width="1.7" height="0.7" fill="#e88810" opacity="0.85"/>
<rect x="418.53" y="45.00" width="1.2" height="2.4" fill="#ffffff" opacity="0.8"/>
<ellipse cx="421.23" cy="46.20" rx="1.15" ry="1.0" fill="#ff9a18"/>
<rect x="422.73" y="45.00" width="1.7" height="0.7" fill="#e88810" opacity="0.85"/>
<rect x="423.13" y="46.30" width="1.1" height="1.0" fill="#e02000"/>
<rect x="421.53" y="47.10" width="1.4" height="0.9" fill="#a0d040"/>
<polygon points="537.92,28.00 539.02,26.10 540.42,25.60 541.82,26.10 542.82,28.00 541.82,29.90 540.42,30.40 539.02,29.90" fill="#ffe6b4"/>
<polygon points="537.92,33.00 539.02,31.10 540.42,30.60 541.82,31.10 542.82,33.00 541.82,34.90 540.42,35.40 539.02,34.90" fill="#ffe6b4"/>
<rect x="538.02" y="26.80" width="1.2" height="2.4" fill="#ffffff" opacity="0.8"/>
<ellipse cx="540.72" cy="28.00" rx="1.15" ry="1.0" fill="#ff9a18"/>
<rect x="542.22" y="26.80" width="1.7" height="0.7" fill="#e88810" opacity="0.85"/>
<rect x="538.02" y="31.80" width="1.2" height="2.4" fill="#ffffff" opacity="0.8"/>
<ellipse cx="540.72" cy="33.00" rx="1.15" ry="1.0" fill="#ff9a18"/>
<rect x="542.22" y="31.80" width="1.7" height="0.7" fill="#e88810" opacity="0.85"/>
<rect x="542.62" y="33.10" width="1.1" height="1.0" fill="#e02000"/>
<rect x="540.52" y="35.90" width="3.0" height="0.8" fill="#e08a10"/>
<rect x="540.52" y="39.60" width="3.0" height="0.8" fill="#7a4a00"/>
<rect x="557.39" y="43.05" width="3.4" height="0.9" fill="#00a000"/>
<polygon points="25.72,169.10 27.12,168.50 27.12,176.30 28.12,177.50 25.72,175.30" fill="#f4fff4" opacity="0.92"/>
<polygon points="26.82,168.30 31.02,168.30 31.02,175.10 28.52,177.30 26.62,175.30" fill="#10e418"/>
<rect x="27.12" y="168.93" width="1.6" height="1.0" fill="#7dff88"/>
<rect x="30.22" y="169.63" width="1.4" height="1.0" fill="#d83000"/>
<rect x="27.92" y="170.63" width="2.2" height="0.6" fill="#b08000" opacity="0.8"/>
<rect x="28.82" y="168.53" width="2.2" height="0.6" fill="#009000" opacity="0.7"/>
<rect x="27.12" y="172.00" width="1.6" height="1.0" fill="#7dff88"/>
<rect x="30.22" y="172.70" width="1.4" height="1.0" fill="#d83000"/>
<rect x="28.82" y="171.60" width="2.2" height="0.6" fill="#009000" opacity="0.7"/>
<rect x="27.12" y="175.07" width="1.6" height="1.0" fill="#7dff88"/>
<rect x="30.22" y="175.77" width="1.4" height="1.0" fill="#d83000"/>
<rect x="27.92" y="176.77" width="2.2" height="0.6" fill="#b08000" opacity="0.8"/>
<rect x="28.82" y="174.67" width="2.2" height="0.6" fill="#009000" opacity="0.7"/>
<polygon points="42.79,169.30 44.19,168.70 44.19,179.60 45.19,180.80 42.79,178.60" fill="#f4fff4" opacity="0.92"/>
<polygon points="43.89,168.50 48.09,168.50 48.09,178.40 45.59,180.60 43.69,178.60" fill="#10e418"/>
<rect x="44.19" y="169.14" width="1.6" height="1.0" fill="#7dff88"/>
<rect x="47.29" y="169.84" width="1.4" height="1.0" fill="#d83000"/>
<rect x="44.99" y="170.84" width="2.2" height="0.6" fill="#b08000" opacity="0.8"/>
<rect x="45.89" y="168.74" width="2.2" height="0.6" fill="#009000" opacity="0.7"/>
<rect x="44.19" y="172.21" width="1.6" height="1.0" fill="#7dff88"/>
<rect x="47.29" y="172.91" width="1.4" height="1.0" fill="#d83000"/>
<rect x="45.89" y="171.81" width="2.2" height="0.6" fill="#009000" opacity="0.7"/>
<rect x="44.19" y="175.29" width="1.6" height="1.0" fill="#7dff88"/>
<rect x="47.29" y="175.99" width="1.4" height="1.0" fill="#d83000"/>
<rect x="44.99" y="176.99" width="2.2" height="0.6" fill="#b08000" opacity="0.8"/>
<rect x="45.89" y="174.89" width="2.2" height="0.6" fill="#009000" opacity="0.7"/>
<rect x="44.19" y="178.36" width="1.6" height="1.0" fill="#7dff88"/>
<rect x="47.29" y="179.06" width="1.4" height="1.0" fill="#d83000"/>
<rect x="45.89" y="177.96" width="2.2" height="0.6" fill="#009000" opacity="0.7"/>
<polygon points="128.14,146.30 129.54,145.70 129.54,150.50 130.54,151.70 128.14,149.50" fill="#f4fff4" opacity="0.92"/>
<polygon points="129.24,145.50 133.44,145.50 133.44,149.30 130.94,151.50 129.04,149.50" fill="#10e418"/>
<rect x="129.54" y="146.15" width="1.6" height="1.0" fill="#7dff88"/>
<rect x="132.64" y="146.85" width="1.4" height="1.0" fill="#d83000"/>
<rect x="130.34" y="147.85" width="2.2" height="0.6" fill="#b08000" opacity="0.8"/>
<rect x="131.24" y="145.75" width="2.2" height="0.6" fill="#009000" opacity="0.7"/>
<rect x="129.54" y="149.25" width="1.6" height="1.0" fill="#7dff88"/>
<rect x="132.64" y="149.95" width="1.4" height="1.0" fill="#d83000"/>
<rect x="131.24" y="148.85" width="2.2" height="0.6" fill="#009000" opacity="0.7"/>
<polygon points="145.21,146.80 146.61,146.20 146.61,150.30 147.61,151.50 145.21,149.30" fill="#f4fff4" opacity="0.92"/>
<polygon points="146.31,146.00 150.51,146.00 150.51,149.10 148.01,151.30 146.11,149.30" fill="#10e418"/>
<rect x="146.61" y="146.47" width="1.6" height="1.0" fill="#7dff88"/>
<rect x="149.71" y="147.18" width="1.4" height="1.0" fill="#d83000"/>
<rect x="147.41" y="148.18" width="2.2" height="0.6" fill="#b08000" opacity="0.8"/>
<rect x="148.31" y="146.07" width="2.2" height="0.6" fill="#009000" opacity="0.7"/>
<rect x="146.61" y="149.22" width="1.6" height="1.0" fill="#7dff88"/>
<rect x="149.71" y="149.93" width="1.4" height="1.0" fill="#d83000"/>
<rect x="148.31" y="148.82" width="2.2" height="0.6" fill="#009000" opacity="0.7"/>
<polygon points="196.42,132.80 197.82,132.20 197.82,133.60 198.82,134.80 196.42,132.60" fill="#f4fff4" opacity="0.92"/>
<polygon points="197.52,132.00 201.72,132.00 201.72,132.40 199.22,134.60 197.32,132.60" fill="#10e418"/>
<rect x="197.82" y="132.50" width="1.6" height="1.0" fill="#7dff88"/>
<rect x="200.92" y="133.20" width="1.4" height="1.0" fill="#d83000"/>
<rect x="198.62" y="134.20" width="2.2" height="0.6" fill="#b08000" opacity="0.8"/>
<rect x="199.52" y="132.10" width="2.2" height="0.6" fill="#009000" opacity="0.7"/>
<polygon points="213.49,141.80 214.89,141.20 214.89,145.10 215.89,146.30 213.49,144.10" fill="#f4fff4" opacity="0.92"/>
<polygon points="214.59,141.00 218.79,141.00 218.79,143.90 216.29,146.10 214.39,144.10" fill="#10e418"/>
<rect x="214.89" y="141.42" width="1.6" height="1.0" fill="#7dff88"/>
<rect x="217.99" y="142.12" width="1.4" height="1.0" fill="#d83000"/>
<rect x="215.69" y="143.12" width="2.2" height="0.6" fill="#b08000" opacity="0.8"/>
<rect x="216.59" y="141.02" width="2.2" height="0.6" fill="#009000" opacity="0.7"/>
<rect x="214.89" y="144.08" width="1.6" height="1.0" fill="#7dff88"/>
<rect x="217.99" y="144.78" width="1.4" height="1.0" fill="#d83000"/>
<rect x="216.59" y="143.68" width="2.2" height="0.6" fill="#009000" opacity="0.7"/>
<polygon points="401.26,59.40 402.66,60.00 402.66,53.20 403.66,52.00 401.26,54.20" fill="#f4fff4" opacity="0.92"/>
<polygon points="402.36,60.00 406.56,60.00 406.56,54.40 404.06,52.20 402.16,54.20" fill="#10e418"/>
<rect x="402.66" y="52.43" width="1.6" height="1.0" fill="#7dff88"/>
<rect x="405.76" y="53.13" width="1.4" height="1.0" fill="#d83000"/>
<rect x="403.46" y="54.13" width="2.2" height="0.6" fill="#b08000" opacity="0.8"/>
<rect x="404.36" y="52.03" width="2.2" height="0.6" fill="#009000" opacity="0.7"/>
<rect x="402.66" y="55.10" width="1.6" height="1.0" fill="#7dff88"/>
<rect x="405.76" y="55.80" width="1.4" height="1.0" fill="#d83000"/>
<rect x="404.36" y="54.70" width="2.2" height="0.6" fill="#009000" opacity="0.7"/>
<rect x="402.66" y="57.77" width="1.6" height="1.0" fill="#7dff88"/>
<rect x="405.76" y="58.47" width="1.4" height="1.0" fill="#d83000"/>
<rect x="403.46" y="59.47" width="2.2" height="0.6" fill="#b08000" opacity="0.8"/>
<rect x="404.36" y="57.37" width="2.2" height="0.6" fill="#009000" opacity="0.7"/>
<polygon points="401.26,68.00 402.66,67.40 402.66,75.50 403.66,76.70 401.26,74.50" fill="#f4fff4" opacity="0.92"/>
<polygon points="402.36,67.20 406.56,67.20 406.56,74.30 404.06,76.50 402.16,74.50" fill="#10e418"/>
<rect x="402.66" y="67.88" width="1.6" height="1.0" fill="#7dff88"/>
<rect x="405.76" y="68.58" width="1.4" height="1.0" fill="#d83000"/>
<rect x="403.46" y="69.58" width="2.2" height="0.6" fill="#b08000" opacity="0.8"/>
<rect x="404.36" y="67.48" width="2.2" height="0.6" fill="#009000" opacity="0.7"/>
<rect x="402.66" y="71.05" width="1.6" height="1.0" fill="#7dff88"/>
<rect x="405.76" y="71.75" width="1.4" height="1.0" fill="#d83000"/>
<rect x="404.36" y="70.65" width="2.2" height="0.6" fill="#009000" opacity="0.7"/>
<rect x="402.66" y="74.22" width="1.6" height="1.0" fill="#7dff88"/>
<rect x="405.76" y="74.92" width="1.4" height="1.0" fill="#d83000"/>
<rect x="403.46" y="75.92" width="2.2" height="0.6" fill="#b08000" opacity="0.8"/>
<rect x="404.36" y="73.82" width="2.2" height="0.6" fill="#009000" opacity="0.7"/>
<polygon points="554.89,57.80 556.29,57.20 556.29,63.30 557.29,64.50 554.89,62.30" fill="#f4fff4" opacity="0.92"/>
<polygon points="555.99,57.00 560.19,57.00 560.19,62.10 557.69,64.30 555.79,62.30" fill="#10e418"/>
<rect x="556.29" y="57.35" width="1.6" height="1.0" fill="#7dff88"/>
<rect x="559.39" y="58.05" width="1.4" height="1.0" fill="#d83000"/>
<rect x="557.09" y="59.05" width="2.2" height="0.6" fill="#b08000" opacity="0.8"/>
<rect x="557.99" y="56.95" width="2.2" height="0.6" fill="#009000" opacity="0.7"/>
<rect x="556.29" y="59.85" width="1.6" height="1.0" fill="#7dff88"/>
<rect x="559.39" y="60.55" width="1.4" height="1.0" fill="#d83000"/>
<rect x="557.99" y="59.45" width="2.2" height="0.6" fill="#009000" opacity="0.7"/>
<rect x="556.29" y="62.35" width="1.6" height="1.0" fill="#7dff88"/>
<rect x="559.39" y="63.05" width="1.4" height="1.0" fill="#d83000"/>
<rect x="557.09" y="64.05" width="2.2" height="0.6" fill="#b08000" opacity="0.8"/>
<rect x="557.99" y="61.95" width="2.2" height="0.6" fill="#009000" opacity="0.7"/>
<rect x="0" y="206.20" width="600" height="1" fill="#d8d8d8"/>
<rect x="-5.25" y="207.00" width="1" height="1.0" fill="#c0c0c0"/>
<text x="-5.05" y="213.30" font-size="6.3" fill="#dedede" textLength="28.6" lengthAdjust="spacingAndGlyphs">20 Apr 18:15</text>
<rect x="28.90" y="207.00" width="1" height="1.0" fill="#c0c0c0"/>
<text x="29.10" y="213.30" font-size="6.3" fill="#dedede" textLength="28.6" lengthAdjust="spacingAndGlyphs">20 Apr 18:45</text>
<rect x="63.05" y="207.00" width="1" height="1.0" fill="#c0c0c0"/>
<text x="63.25" y="213.30" font-size="6.3" fill="#dedede" textLength="28.6" lengthAdjust="spacingAndGlyphs">20 Apr 19:15</text>
<rect x="97.20" y="207.00" width="1" height="1.0" fill="#c0c0c0"/>
<text x="97.40" y="213.30" font-size="6.3" fill="#dedede" textLength="28.6" lengthAdjust="spacingAndGlyphs">20 Apr 19:45</text>
<rect x="131.35" y="207.00" width="1" height="1.0" fill="#c0c0c0"/>
<text x="131.55" y="213.30" font-size="6.3" fill="#dedede" textLength="28.6" lengthAdjust="spacingAndGlyphs">20 Apr 20:15</text>
<rect x="165.50" y="207.00" width="1" height="1.0" fill="#c0c0c0"/>
<text x="165.70" y="213.30" font-size="6.3" fill="#dedede" textLength="28.6" lengthAdjust="spacingAndGlyphs">20 Apr 20:45</text>
<rect x="199.65" y="207.00" width="1" height="1.0" fill="#c0c0c0"/>
<text x="199.85" y="213.30" font-size="6.3" fill="#dedede" textLength="28.6" lengthAdjust="spacingAndGlyphs">20 Apr 21:15</text>
<rect x="233.80" y="207.00" width="1" height="1.0" fill="#c0c0c0"/>
<text x="234.00" y="213.30" font-size="6.3" fill="#dedede" textLength="28.6" lengthAdjust="spacingAndGlyphs">20 Apr 21:45</text>
<rect x="267.95" y="207.00" width="1" height="1.0" fill="#c0c0c0"/>
<text x="268.15" y="213.30" font-size="6.3" fill="#dedede" textLength="28.6" lengthAdjust="spacingAndGlyphs">20 Apr 22:15</text>
<rect x="302.10" y="207.00" width="1" height="1.0" fill="#c0c0c0"/>
<text x="302.30" y="213.30" font-size="6.3" fill="#dedede" textLength="28.6" lengthAdjust="spacingAndGlyphs">20 Apr 22:45</text>
<rect x="336.25" y="207.00" width="1" height="1.0" fill="#c0c0c0"/>
<text x="336.45" y="213.30" font-size="6.3" fill="#dedede" textLength="28.6" lengthAdjust="spacingAndGlyphs">20 Apr 23:15</text>
<rect x="370.40" y="207.00" width="1" height="1.0" fill="#c0c0c0"/>
<text x="370.60" y="213.30" font-size="6.3" fill="#dedede" textLength="28.6" lengthAdjust="spacingAndGlyphs">20 Apr 23:45</text>
<rect x="404.55" y="207.00" width="1" height="1.0" fill="#c0c0c0"/>
<text x="404.75" y="213.30" font-size="6.3" fill="#dedede" textLength="28.6" lengthAdjust="spacingAndGlyphs">21 Apr 00:15</text>
<rect x="438.70" y="207.00" width="1" height="1.0" fill="#c0c0c0"/>
<text x="438.90" y="213.30" font-size="6.3" fill="#dedede" textLength="28.6" lengthAdjust="spacingAndGlyphs">21 Apr 00:45</text>
<rect x="472.85" y="207.00" width="1" height="1.0" fill="#c0c0c0"/>
<text x="473.05" y="213.30" font-size="6.3" fill="#dedede" textLength="28.6" lengthAdjust="spacingAndGlyphs">21 Apr 01:15</text>
<rect x="507.00" y="207.00" width="1" height="1.0" fill="#c0c0c0"/>
<text x="507.20" y="213.30" font-size="6.3" fill="#dedede" textLength="28.6" lengthAdjust="spacingAndGlyphs">21 Apr 01:45</text>
<rect x="541.15" y="207.00" width="1" height="1.0" fill="#c0c0c0"/>
<text x="541.35" y="213.30" font-size="6.3" fill="#dedede" textLength="28.6" lengthAdjust="spacingAndGlyphs">21 Apr 02:15</text>
</svg>
<div class="chartbot"></div><div class="hdrline"></div>
<div class="tbl" style="position:absolute;left:0;top:260.5px;width:600px;height:279.75px;background:#fff;overflow:hidden">
<div class="row" style="top:14.00px;height:10.63px;background:#ffffff"></div>
<div class="row" style="top:24.63px;height:10.63px;background:#0078d7"></div>
<div class="row" style="top:35.26px;height:10.63px;background:#ffffff"></div>
<div class="row" style="top:45.89px;height:10.63px;background:#ebebeb"></div>
<div class="row" style="top:56.52px;height:10.63px;background:#ffffff"></div>
<div class="row" style="top:67.15px;height:10.63px;background:#ebebeb"></div>
<div class="row" style="top:77.78px;height:10.63px;background:#ffffff"></div>
<div class="row" style="top:88.41px;height:10.63px;background:#ebebeb"></div>
<div class="row" style="top:99.04px;height:10.63px;background:#ffffff"></div>
<div class="row" style="top:109.67px;height:10.63px;background:#ebebeb"></div>
<div class="row" style="top:120.30px;height:10.63px;background:#ffffff"></div>
<div class="row" style="top:130.93px;height:10.63px;background:#ebebeb"></div>
<div class="row" style="top:141.56px;height:10.63px;background:#ffffff"></div>
<div class="row" style="top:152.19px;height:10.63px;background:#ebebeb"></div>
<div class="row" style="top:162.82px;height:10.63px;background:#ffffff"></div>
<div class="row" style="top:173.45px;height:10.63px;background:#ebebeb"></div>
<div class="row" style="top:184.08px;height:10.63px;background:#ffffff"></div>
<div class="row" style="top:194.71px;height:10.63px;background:#ebebeb"></div>
<div class="row" style="top:205.34px;height:10.63px;background:#ffffff"></div>
<div class="row" style="top:215.97px;height:10.63px;background:#ebebeb"></div>
<div class="row" style="top:226.60px;height:10.63px;background:#ffffff"></div>
<div class="row" style="top:237.23px;height:10.63px;background:#ebebeb"></div>
<div class="row" style="top:247.86px;height:10.63px;background:#ffffff"></div>
<div class="row" style="top:258.49px;height:10.63px;background:#ebebeb"></div>
<div class="row" style="top:269.12px;height:10.63px;background:#ffffff"></div>
<div class="pink" style="left:189.00px;top:14.00px;width:53.00px;height:265.75px"></div>
<div style="position:absolute;left:189.00px;top:24.38px;width:53.00px;height:0.5px;background:#ffc4c4"></div>
<div style="position:absolute;left:189.00px;top:35.01px;width:53.00px;height:0.5px;background:#ffc4c4"></div>
<div style="position:absolute;left:189.00px;top:45.64px;width:53.00px;height:0.5px;background:#ffc4c4"></div>
<div style="position:absolute;left:189.00px;top:56.27px;width:53.00px;height:0.5px;background:#ffc4c4"></div>
<div style="position:absolute;left:189.00px;top:66.90px;width:53.00px;height:0.5px;background:#ffc4c4"></div>
<div style="position:absolute;left:189.00px;top:77.53px;width:53.00px;height:0.5px;background:#ffc4c4"></div>
<div style="position:absolute;left:189.00px;top:88.16px;width:53.00px;height:0.5px;background:#ffc4c4"></div>
<div style="position:absolute;left:189.00px;top:98.79px;width:53.00px;height:0.5px;background:#ffc4c4"></div>
<div style="position:absolute;left:189.00px;top:109.42px;width:53.00px;height:0.5px;background:#ffc4c4"></div>
<div style="position:absolute;left:189.00px;top:120.05px;width:53.00px;height:0.5px;background:#ffc4c4"></div>
<div style="position:absolute;left:189.00px;top:130.68px;width:53.00px;height:0.5px;background:#ffc4c4"></div>
<div style="position:absolute;left:189.00px;top:141.31px;width:53.00px;height:0.5px;background:#ffc4c4"></div>
<div style="position:absolute;left:189.00px;top:151.94px;width:53.00px;height:0.5px;background:#ffc4c4"></div>
<div style="position:absolute;left:189.00px;top:162.57px;width:53.00px;height:0.5px;background:#ffc4c4"></div>
<div style="position:absolute;left:189.00px;top:173.20px;width:53.00px;height:0.5px;background:#ffc4c4"></div>
<div style="position:absolute;left:189.00px;top:183.83px;width:53.00px;height:0.5px;background:#ffc4c4"></div>
<div style="position:absolute;left:189.00px;top:194.46px;width:53.00px;height:0.5px;background:#ffc4c4"></div>
<div style="position:absolute;left:189.00px;top:205.09px;width:53.00px;height:0.5px;background:#ffc4c4"></div>
<div style="position:absolute;left:189.00px;top:215.72px;width:53.00px;height:0.5px;background:#ffc4c4"></div>
<div style="position:absolute;left:189.00px;top:226.35px;width:53.00px;height:0.5px;background:#ffc4c4"></div>
<div style="position:absolute;left:189.00px;top:236.98px;width:53.00px;height:0.5px;background:#ffc4c4"></div>
<div style="position:absolute;left:189.00px;top:247.61px;width:53.00px;height:0.5px;background:#ffc4c4"></div>
<div style="position:absolute;left:189.00px;top:258.24px;width:53.00px;height:0.5px;background:#ffc4c4"></div>
<div style="position:absolute;left:189.00px;top:268.87px;width:53.00px;height:0.5px;background:#ffc4c4"></div>
<div style="position:absolute;left:189.00px;top:24.63px;width:52.00px;height:9.63px;border:0.5px solid #6a8fc0;box-sizing:content-box"></div>
<div style="position:absolute;left:0;top:13.40px;width:600px;height:0.6px;background:#e2e2e2"></div>
<div class="vsep" style="left:37.50px"></div>
<div class="vsep" style="left:80.50px"></div>
<div class="vsep" style="left:134.80px"></div>
<div class="vsep" style="left:187.90px"></div>
<div class="vsep" style="left:241.50px"></div>
<div class="vsep" style="left:295.80px"></div>
<div class="vsep" style="left:414.10px"></div>
<div class="vsep" style="left:468.20px"></div>
<div class="vsep" style="left:522.00px"></div>
<div class="vsep" style="left:575.80px"></div>
<div style="position:absolute;left:37.50px;top:24.63px;width:0.8px;height:10.63px;background:#3f92de"></div>
<div style="position:absolute;left:80.50px;top:24.63px;width:0.8px;height:10.63px;background:#3f92de"></div>
<div style="position:absolute;left:134.80px;top:24.63px;width:0.8px;height:10.63px;background:#3f92de"></div>
<div style="position:absolute;left:187.90px;top:24.63px;width:1px;height:10.63px;background:#2f82d6"></div>
<div style="position:absolute;left:241.50px;top:24.63px;width:1px;height:10.63px;background:#eef2fa"></div>
<div style="position:absolute;left:295.80px;top:24.63px;width:0.8px;height:10.63px;background:#3f92de"></div>
<div style="position:absolute;left:414.10px;top:24.63px;width:0.8px;height:10.63px;background:#3f92de"></div>
<div style="position:absolute;left:468.20px;top:24.63px;width:0.8px;height:10.63px;background:#3f92de"></div>
<div style="position:absolute;left:522.00px;top:24.63px;width:0.8px;height:10.63px;background:#3f92de"></div>
<div style="position:absolute;left:575.80px;top:24.63px;width:0.8px;height:10.63px;background:#3f92de"></div>
<svg width="600" height="279.75" viewBox="0 0 600 279.75" style="position:absolute;left:0;top:0;display:block" font-family='"Liberation Sans", sans-serif'>
<text x="35.30" y="9.75" font-size="6.6" fill="#3a3a3a" text-anchor="end" textLength="12.1" lengthAdjust="spacingAndGlyphs">Type</text>
<text x="78.30" y="9.75" font-size="6.6" fill="#3a3a3a" text-anchor="end" textLength="10.0" lengthAdjust="spacingAndGlyphs">Size</text>
<text x="132.60" y="9.75" font-size="6.6" fill="#3a3a3a" text-anchor="end" textLength="20.5" lengthAdjust="spacingAndGlyphs">Symbol</text>
<text x="185.70" y="9.75" font-size="6.6" fill="#3a3a3a" text-anchor="end" textLength="13.5" lengthAdjust="spacingAndGlyphs">Price</text>
<text x="239.30" y="9.75" font-size="6.6" fill="#3a3a3a" text-anchor="end" textLength="12.0" lengthAdjust="spacingAndGlyphs">S / L</text>
<text x="293.60" y="9.75" font-size="6.6" fill="#3a3a3a" text-anchor="end" textLength="12.3" lengthAdjust="spacingAndGlyphs">T / P</text>
<text x="411.90" y="9.75" font-size="6.6" fill="#3a3a3a" text-anchor="end" textLength="12.8" lengthAdjust="spacingAndGlyphs">Time</text>
<text x="466.00" y="9.75" font-size="6.6" fill="#3a3a3a" text-anchor="end" textLength="13.5" lengthAdjust="spacingAndGlyphs">Price</text>
<text x="473.80" y="9.75" font-size="6.6" fill="#3a3a3a" textLength="34.6" lengthAdjust="spacingAndGlyphs">Commission</text>
<path d="M515.2 6.70 H518.8 L517 9.00 Z" fill="none" stroke="#8c8c8c" stroke-width="0.5"/>
<text x="573.60" y="9.75" font-size="6.6" fill="#3a3a3a" text-anchor="end" textLength="14.3" lengthAdjust="spacingAndGlyphs">Swap</text>
<text x="36.40" y="21.30" font-size="7" fill="#2a2a2a" text-anchor="end" textLength="10.8" lengthAdjust="spacingAndGlyphs">buy</text>
<text x="79.40" y="21.30" font-size="7" fill="#2a2a2a" text-anchor="end" textLength="14.0" lengthAdjust="spacingAndGlyphs">78.24</text>
<text x="133.70" y="21.30" font-size="7" fill="#2a2a2a" text-anchor="end" textLength="22.8" lengthAdjust="spacingAndGlyphs">btcusdp</text>
<text x="186.80" y="21.30" font-size="7" fill="#2a2a2a" text-anchor="end" textLength="23.4" lengthAdjust="spacingAndGlyphs">84476.80</text>
<text x="240.40" y="21.30" font-size="7" fill="#2a2a2a" text-anchor="end" textLength="23.4" lengthAdjust="spacingAndGlyphs">84516.70</text>
<text x="294.70" y="21.30" font-size="7" fill="#2a2a2a" text-anchor="end" textLength="23.4" lengthAdjust="spacingAndGlyphs">85120.51</text>
<text x="413.00" y="21.30" font-size="7" fill="#2a2a2a" text-anchor="end" textLength="51.8" lengthAdjust="spacingAndGlyphs">2025.04.20 21:52:23</text>
<text x="467.10" y="21.30" font-size="7" fill="#2a2a2a" text-anchor="end" textLength="23.4" lengthAdjust="spacingAndGlyphs">84516.70</text>
<text x="520.90" y="21.30" font-size="7" fill="#2a2a2a" text-anchor="end" textLength="19.4" lengthAdjust="spacingAndGlyphs">-312.96</text>
<text x="574.70" y="21.30" font-size="7" fill="#2a2a2a" text-anchor="end" textLength="10.9" lengthAdjust="spacingAndGlyphs">0.00</text>
<text x="36.40" y="31.93" font-size="7" fill="#ffffff" text-anchor="end" textLength="8.5" lengthAdjust="spacingAndGlyphs">sell</text>
<text x="79.40" y="31.93" font-size="7" fill="#ffffff" text-anchor="end" textLength="14.0" lengthAdjust="spacingAndGlyphs">78.52</text>
<text x="133.70" y="31.93" font-size="7" fill="#ffffff" text-anchor="end" textLength="22.8" lengthAdjust="spacingAndGlyphs">btcusdp</text>
<text x="186.80" y="31.93" font-size="7" fill="#ffffff" text-anchor="end" textLength="23.4" lengthAdjust="spacingAndGlyphs">84557.50</text>
<text x="240.40" y="31.93" font-size="7" fill="#2a2a2a" text-anchor="end" textLength="23.4" lengthAdjust="spacingAndGlyphs">84497.00</text>
<text x="294.70" y="31.93" font-size="7" fill="#ffffff" text-anchor="end" textLength="23.4" lengthAdjust="spacingAndGlyphs">83893.19</text>
<text x="413.00" y="31.93" font-size="7" fill="#ffffff" text-anchor="end" textLength="51.8" lengthAdjust="spacingAndGlyphs">2025.04.20 22:23:04</text>
<text x="467.10" y="31.93" font-size="7" fill="#ffffff" text-anchor="end" textLength="23.4" lengthAdjust="spacingAndGlyphs">84497.00</text>
<text x="520.90" y="31.93" font-size="7" fill="#ffffff" text-anchor="end" textLength="19.4" lengthAdjust="spacingAndGlyphs">-314.08</text>
<text x="574.70" y="31.93" font-size="7" fill="#ffffff" text-anchor="end" textLength="10.9" lengthAdjust="spacingAndGlyphs">0.00</text>
<text x="36.40" y="42.56" font-size="7" fill="#2a2a2a" text-anchor="end" textLength="8.5" lengthAdjust="spacingAndGlyphs">sell</text>
<text x="79.40" y="42.56" font-size="7" fill="#2a2a2a" text-anchor="end" textLength="14.0" lengthAdjust="spacingAndGlyphs">78.90</text>
<text x="133.70" y="42.56" font-size="7" fill="#2a2a2a" text-anchor="end" textLength="22.8" lengthAdjust="spacingAndGlyphs">btcusdp</text>
<text x="186.80" y="42.56" font-size="7" fill="#2a2a2a" text-anchor="end" textLength="23.4" lengthAdjust="spacingAndGlyphs">84612.90</text>
<text x="240.40" y="42.56" font-size="7" fill="#2a2a2a" text-anchor="end" textLength="23.4" lengthAdjust="spacingAndGlyphs">84602.60</text>
<text x="294.70" y="42.56" font-size="7" fill="#2a2a2a" text-anchor="end" textLength="23.4" lengthAdjust="spacingAndGlyphs">83998.79</text>
<text x="413.00" y="42.56" font-size="7" fill="#2a2a2a" text-anchor="end" textLength="51.8" lengthAdjust="spacingAndGlyphs">2025.04.20 22:51:42</text>
<text x="467.10" y="42.56" font-size="7" fill="#2a2a2a" text-anchor="end" textLength="23.4" lengthAdjust="spacingAndGlyphs">84602.60</text>
<text x="520.90" y="42.56" font-size="7" fill="#2a2a2a" text-anchor="end" textLength="19.4" lengthAdjust="spacingAndGlyphs">-315.60</text>
<text x="574.70" y="42.56" font-size="7" fill="#2a2a2a" text-anchor="end" textLength="10.9" lengthAdjust="spacingAndGlyphs">0.00</text>
<text x="36.40" y="53.19" font-size="7" fill="#2a2a2a" text-anchor="end" textLength="8.5" lengthAdjust="spacingAndGlyphs">sell</text>
<text x="79.40" y="53.19" font-size="7" fill="#2a2a2a" text-anchor="end" textLength="14.0" lengthAdjust="spacingAndGlyphs">78.95</text>
<text x="133.70" y="53.19" font-size="7" fill="#2a2a2a" text-anchor="end" textLength="22.8" lengthAdjust="spacingAndGlyphs">btcusdp</text>
<text x="186.80" y="53.19" font-size="7" fill="#2a2a2a" text-anchor="end" textLength="23.4" lengthAdjust="spacingAndGlyphs">84621.40</text>
<text x="240.40" y="53.19" font-size="7" fill="#2a2a2a" text-anchor="end" textLength="23.4" lengthAdjust="spacingAndGlyphs">84611.80</text>
<text x="294.70" y="53.19" font-size="7" fill="#2a2a2a" text-anchor="end" textLength="23.4" lengthAdjust="spacingAndGlyphs">84007.99</text>
<text x="413.00" y="53.19" font-size="7" fill="#2a2a2a" text-anchor="end" textLength="51.8" lengthAdjust="spacingAndGlyphs">2025.04.20 22:54:43</text>
<text x="467.10" y="53.19" font-size="7" fill="#2a2a2a" text-anchor="end" textLength="23.4" lengthAdjust="spacingAndGlyphs">84611.80</text>
<text x="520.90" y="53.19" font-size="7" fill="#2a2a2a" text-anchor="end" textLength="19.4" lengthAdjust="spacingAndGlyphs">-315.80</text>
<text x="574.70" y="53.19" font-size="7" fill="#2a2a2a" text-anchor="end" textLength="10.9" lengthAdjust="spacingAndGlyphs">0.00</text>
<text x="36.40" y="63.82" font-size="7" fill="#2a2a2a" text-anchor="end" textLength="8.5" lengthAdjust="spacingAndGlyphs">sell</text>
<text x="79.40" y="63.82" font-size="7" fill="#2a2a2a" text-anchor="end" textLength="14.0" lengthAdjust="spacingAndGlyphs">78.96</text>
<text x="133.70" y="63.82" font-size="7" fill="#2a2a2a" text-anchor="end" textLength="22.8" lengthAdjust="spacingAndGlyphs">btcusdp</text>
<text x="186.80" y="63.82" font-size="7" fill="#2a2a2a" text-anchor="end" textLength="23.4" lengthAdjust="spacingAndGlyphs">84590.40</text>
<text x="240.40" y="63.82" font-size="7" fill="#2a2a2a" text-anchor="end" textLength="23.4" lengthAdjust="spacingAndGlyphs">84593.20</text>
<text x="294.70" y="63.82" font-size="7" fill="#2a2a2a" text-anchor="end" textLength="23.4" lengthAdjust="spacingAndGlyphs">83989.39</text>
<text x="413.00" y="63.82" font-size="7" fill="#2a2a2a" text-anchor="end" textLength="51.8" lengthAdjust="spacingAndGlyphs">2025.04.20 22:50:25</text>
<text x="467.10" y="63.82" font-size="7" fill="#2a2a2a" text-anchor="end" textLength="23.4" lengthAdjust="spacingAndGlyphs">84593.20</text>
<text x="520.90" y="63.82" font-size="7" fill="#2a2a2a" text-anchor="end" textLength="19.4" lengthAdjust="spacingAndGlyphs">-315.84</text>
<text x="574.70" y="63.82" font-size="7" fill="#2a2a2a" text-anchor="end" textLength="10.9" lengthAdjust="spacingAndGlyphs">0.00</text>
<text x="36.40" y="74.45" font-size="7" fill="#2a2a2a" text-anchor="end" textLength="8.5" lengthAdjust="spacingAndGlyphs">sell</text>
<text x="79.40" y="74.45" font-size="7" fill="#2a2a2a" text-anchor="end" textLength="14.0" lengthAdjust="spacingAndGlyphs">78.99</text>
<text x="133.70" y="74.45" font-size="7" fill="#2a2a2a" text-anchor="end" textLength="22.8" lengthAdjust="spacingAndGlyphs">btcusdp</text>
<text x="186.80" y="74.45" font-size="7" fill="#2a2a2a" text-anchor="end" textLength="23.4" lengthAdjust="spacingAndGlyphs">84612.50</text>
<text x="240.40" y="74.45" font-size="7" fill="#2a2a2a" text-anchor="end" textLength="23.4" lengthAdjust="spacingAndGlyphs">84601.60</text>
<text x="294.70" y="74.45" font-size="7" fill="#2a2a2a" text-anchor="end" textLength="23.4" lengthAdjust="spacingAndGlyphs">83997.79</text>
<text x="413.00" y="74.45" font-size="7" fill="#2a2a2a" text-anchor="end" textLength="51.8" lengthAdjust="spacingAndGlyphs">2025.04.20 22:56:24</text>
<text x="467.10" y="74.45" font-size="7" fill="#2a2a2a" text-anchor="end" textLength="23.4" lengthAdjust="spacingAndGlyphs">84601.60</text>
<text x="520.90" y="74.45" font-size="7" fill="#2a2a2a" text-anchor="end" textLength="19.4" lengthAdjust="spacingAndGlyphs">-315.96</text>
<text x="574.70" y="74.45" font-size="7" fill="#2a2a2a" text-anchor="end" textLength="10.9" lengthAdjust="spacingAndGlyphs">0.00</text>
<text x="36.40" y="85.08" font-size="7" fill="#2a2a2a" text-anchor="end" textLength="8.5" lengthAdjust="spacingAndGlyphs">sell</text>
<text x="79.40" y="85.08" font-size="7" fill="#2a2a2a" text-anchor="end" textLength="14.0" lengthAdjust="spacingAndGlyphs">79.05</text>
<text x="133.70" y="85.08" font-size="7" fill="#2a2a2a" text-anchor="end" textLength="22.8" lengthAdjust="spacingAndGlyphs">btcusdp</text>
<text x="186.80" y="85.08" font-size="7" fill="#2a2a2a" text-anchor="end" textLength="23.4" lengthAdjust="spacingAndGlyphs">84612.20</text>
<text x="240.40" y="85.08" font-size="7" fill="#2a2a2a" text-anchor="end" textLength="23.4" lengthAdjust="spacingAndGlyphs">84606.20</text>
<text x="294.70" y="85.08" font-size="7" fill="#2a2a2a" text-anchor="end" textLength="23.4" lengthAdjust="spacingAndGlyphs">84002.39</text>
<text x="413.00" y="85.08" font-size="7" fill="#2a2a2a" text-anchor="end" textLength="51.8" lengthAdjust="spacingAndGlyphs">2025.04.20 22:59:57</text>
<text x="467.10" y="85.08" font-size="7" fill="#2a2a2a" text-anchor="end" textLength="23.4" lengthAdjust="spacingAndGlyphs">84606.20</text>
<text x="520.90" y="85.08" font-size="7" fill="#2a2a2a" text-anchor="end" textLength="19.4" lengthAdjust="spacingAndGlyphs">-316.20</text>
<text x="574.70" y="85.08" font-size="7" fill="#2a2a2a" text-anchor="end" textLength="10.9" lengthAdjust="spacingAndGlyphs">0.00</text>
<text x="36.40" y="95.71" font-size="7" fill="#2a2a2a" text-anchor="end" textLength="8.5" lengthAdjust="spacingAndGlyphs">sell</text>
<text x="79.40" y="95.71" font-size="7" fill="#2a2a2a" text-anchor="end" textLength="14.0" lengthAdjust="spacingAndGlyphs">79.05</text>
<text x="133.70" y="95.71" font-size="7" fill="#2a2a2a" text-anchor="end" textLength="22.8" lengthAdjust="spacingAndGlyphs">btcusdp</text>
<text x="186.80" y="95.71" font-size="7" fill="#2a2a2a" text-anchor="end" textLength="23.4" lengthAdjust="spacingAndGlyphs">84612.50</text>
<text x="240.40" y="95.71" font-size="7" fill="#2a2a2a" text-anchor="end" textLength="23.4" lengthAdjust="spacingAndGlyphs">84608.70</text>
<text x="294.70" y="95.71" font-size="7" fill="#2a2a2a" text-anchor="end" textLength="23.4" lengthAdjust="spacingAndGlyphs">84004.89</text>
<text x="413.00" y="95.71" font-size="7" fill="#2a2a2a" text-anchor="end" textLength="51.8" lengthAdjust="spacingAndGlyphs">2025.04.20 22:58:14</text>
<text x="467.10" y="95.71" font-size="7" fill="#2a2a2a" text-anchor="end" textLength="23.4" lengthAdjust="spacingAndGlyphs">84608.70</text>
<text x="520.90" y="95.71" font-size="7" fill="#2a2a2a" text-anchor="end" textLength="19.4" lengthAdjust="spacingAndGlyphs">-316.20</text>
<text x="574.70" y="95.71" font-size="7" fill="#2a2a2a" text-anchor="end" textLength="10.9" lengthAdjust="spacingAndGlyphs">0.00</text>
<text x="36.40" y="106.34" font-size="7" fill="#2a2a2a" text-anchor="end" textLength="8.5" lengthAdjust="spacingAndGlyphs">sell</text>
<text x="79.40" y="106.34" font-size="7" fill="#2a2a2a" text-anchor="end" textLength="14.0" lengthAdjust="spacingAndGlyphs">79.06</text>
<text x="133.70" y="106.34" font-size="7" fill="#2a2a2a" text-anchor="end" textLength="22.8" lengthAdjust="spacingAndGlyphs">btcusdp</text>
<text x="186.80" y="106.34" font-size="7" fill="#2a2a2a" text-anchor="end" textLength="23.4" lengthAdjust="spacingAndGlyphs">84606.30</text>
<text x="240.40" y="106.34" font-size="7" fill="#2a2a2a" text-anchor="end" textLength="23.4" lengthAdjust="spacingAndGlyphs">84573.60</text>
<text x="294.70" y="106.34" font-size="7" fill="#2a2a2a" text-anchor="end" textLength="23.4" lengthAdjust="spacingAndGlyphs">83969.79</text>
<text x="413.00" y="106.34" font-size="7" fill="#2a2a2a" text-anchor="end" textLength="51.8" lengthAdjust="spacingAndGlyphs">2025.04.20 23:01:01</text>
<text x="467.10" y="106.34" font-size="7" fill="#2a2a2a" text-anchor="end" textLength="23.4" lengthAdjust="spacingAndGlyphs">84573.60</text>
<text x="520.90" y="106.34" font-size="7" fill="#2a2a2a" text-anchor="end" textLength="19.4" lengthAdjust="spacingAndGlyphs">-316.24</text>
<text x="574.70" y="106.34" font-size="7" fill="#2a2a2a" text-anchor="end" textLength="10.9" lengthAdjust="spacingAndGlyphs">0.00</text>
<text x="36.40" y="116.97" font-size="7" fill="#2a2a2a" text-anchor="end" textLength="8.5" lengthAdjust="spacingAndGlyphs">sell</text>
<text x="79.40" y="116.97" font-size="7" fill="#2a2a2a" text-anchor="end" textLength="14.0" lengthAdjust="spacingAndGlyphs">79.19</text>
<text x="133.70" y="116.97" font-size="7" fill="#2a2a2a" text-anchor="end" textLength="22.8" lengthAdjust="spacingAndGlyphs">btcusdp</text>
<text x="186.80" y="116.97" font-size="7" fill="#2a2a2a" text-anchor="end" textLength="23.4" lengthAdjust="spacingAndGlyphs">84923.20</text>
<text x="240.40" y="116.97" font-size="7" fill="#2a2a2a" text-anchor="end" textLength="23.4" lengthAdjust="spacingAndGlyphs">84918.80</text>
<text x="294.70" y="116.97" font-size="7" fill="#2a2a2a" text-anchor="end" textLength="23.4" lengthAdjust="spacingAndGlyphs">84314.99</text>
<text x="413.00" y="116.97" font-size="7" fill="#2a2a2a" text-anchor="end" textLength="51.8" lengthAdjust="spacingAndGlyphs">2025.04.20 23:05:48</text>
<text x="467.10" y="116.97" font-size="7" fill="#2a2a2a" text-anchor="end" textLength="23.4" lengthAdjust="spacingAndGlyphs">84918.80</text>
<text x="520.90" y="116.97" font-size="7" fill="#2a2a2a" text-anchor="end" textLength="19.4" lengthAdjust="spacingAndGlyphs">-316.76</text>
<text x="574.70" y="116.97" font-size="7" fill="#2a2a2a" text-anchor="end" textLength="10.9" lengthAdjust="spacingAndGlyphs">0.00</text>
<text x="36.40" y="127.60" font-size="7" fill="#2a2a2a" text-anchor="end" textLength="8.5" lengthAdjust="spacingAndGlyphs">sell</text>
<text x="79.40" y="127.60" font-size="7" fill="#2a2a2a" text-anchor="end" textLength="14.0" lengthAdjust="spacingAndGlyphs">79.20</text>
<text x="133.70" y="127.60" font-size="7" fill="#2a2a2a" text-anchor="end" textLength="22.8" lengthAdjust="spacingAndGlyphs">btcusdp</text>
<text x="186.80" y="127.60" font-size="7" fill="#2a2a2a" text-anchor="end" textLength="23.4" lengthAdjust="spacingAndGlyphs">84915.50</text>
<text x="240.40" y="127.60" font-size="7" fill="#2a2a2a" text-anchor="end" textLength="23.4" lengthAdjust="spacingAndGlyphs">84878.10</text>
<text x="294.70" y="127.60" font-size="7" fill="#2a2a2a" text-anchor="end" textLength="23.4" lengthAdjust="spacingAndGlyphs">84274.29</text>
<text x="413.00" y="127.60" font-size="7" fill="#2a2a2a" text-anchor="end" textLength="51.8" lengthAdjust="spacingAndGlyphs">2025.04.20 23:05:55</text>
<text x="467.10" y="127.60" font-size="7" fill="#2a2a2a" text-anchor="end" textLength="23.4" lengthAdjust="spacingAndGlyphs">84878.10</text>
<text x="520.90" y="127.60" font-size="7" fill="#2a2a2a" text-anchor="end" textLength="19.4" lengthAdjust="spacingAndGlyphs">-316.80</text>
<text x="574.70" y="127.60" font-size="7" fill="#2a2a2a" text-anchor="end" textLength="10.9" lengthAdjust="spacingAndGlyphs">0.00</text>
<text x="36.40" y="138.23" font-size="7" fill="#2a2a2a" text-anchor="end" textLength="8.5" lengthAdjust="spacingAndGlyphs">sell</text>
<text x="79.40" y="138.23" font-size="7" fill="#2a2a2a" text-anchor="end" textLength="14.0" lengthAdjust="spacingAndGlyphs">79.25</text>
<text x="133.70" y="138.23" font-size="7" fill="#2a2a2a" text-anchor="end" textLength="22.8" lengthAdjust="spacingAndGlyphs">btcusdp</text>
<text x="186.80" y="138.23" font-size="7" fill="#2a2a2a" text-anchor="end" textLength="23.4" lengthAdjust="spacingAndGlyphs">84796.00</text>
<text x="240.40" y="138.23" font-size="7" fill="#2a2a2a" text-anchor="end" textLength="23.4" lengthAdjust="spacingAndGlyphs">84799.80</text>
<text x="294.70" y="138.23" font-size="7" fill="#2a2a2a" text-anchor="end" textLength="23.4" lengthAdjust="spacingAndGlyphs">84195.99</text>
<text x="413.00" y="138.23" font-size="7" fill="#2a2a2a" text-anchor="end" textLength="51.8" lengthAdjust="spacingAndGlyphs">2025.04.20 23:05:25</text>
<text x="467.10" y="138.23" font-size="7" fill="#2a2a2a" text-anchor="end" textLength="23.4" lengthAdjust="spacingAndGlyphs">84799.80</text>
<text x="520.90" y="138.23" font-size="7" fill="#2a2a2a" text-anchor="end" textLength="19.4" lengthAdjust="spacingAndGlyphs">-317.00</text>
<text x="574.70" y="138.23" font-size="7" fill="#2a2a2a" text-anchor="end" textLength="10.9" lengthAdjust="spacingAndGlyphs">0.00</text>
<text x="36.40" y="148.86" font-size="7" fill="#2a2a2a" text-anchor="end" textLength="8.5" lengthAdjust="spacingAndGlyphs">sell</text>
<text x="79.40" y="148.86" font-size="7" fill="#2a2a2a" text-anchor="end" textLength="14.0" lengthAdjust="spacingAndGlyphs">79.28</text>
<text x="133.70" y="148.86" font-size="7" fill="#2a2a2a" text-anchor="end" textLength="22.8" lengthAdjust="spacingAndGlyphs">btcusdp</text>
<text x="186.80" y="148.86" font-size="7" fill="#2a2a2a" text-anchor="end" textLength="23.4" lengthAdjust="spacingAndGlyphs">84703.00</text>
<text x="240.40" y="148.86" font-size="7" fill="#2a2a2a" text-anchor="end" textLength="23.4" lengthAdjust="spacingAndGlyphs">84702.80</text>
<text x="294.70" y="148.86" font-size="7" fill="#2a2a2a" text-anchor="end" textLength="23.4" lengthAdjust="spacingAndGlyphs">84098.99</text>
<text x="413.00" y="148.86" font-size="7" fill="#2a2a2a" text-anchor="end" textLength="51.8" lengthAdjust="spacingAndGlyphs">2025.04.20 23:05:13</text>
<text x="467.10" y="148.86" font-size="7" fill="#2a2a2a" text-anchor="end" textLength="23.4" lengthAdjust="spacingAndGlyphs">84702.80</text>
<text x="520.90" y="148.86" font-size="7" fill="#2a2a2a" text-anchor="end" textLength="19.4" lengthAdjust="spacingAndGlyphs">-317.12</text>
<text x="574.70" y="148.86" font-size="7" fill="#2a2a2a" text-anchor="end" textLength="10.9" lengthAdjust="spacingAndGlyphs">0.00</text>
<text x="36.40" y="159.49" font-size="7" fill="#2a2a2a" text-anchor="end" textLength="8.5" lengthAdjust="spacingAndGlyphs">sell</text>
<text x="79.40" y="159.49" font-size="7" fill="#2a2a2a" text-anchor="end" textLength="14.0" lengthAdjust="spacingAndGlyphs">79.46</text>
<text x="133.70" y="159.49" font-size="7" fill="#2a2a2a" text-anchor="end" textLength="22.8" lengthAdjust="spacingAndGlyphs">btcusdp</text>
<text x="186.80" y="159.49" font-size="7" fill="#2a2a2a" text-anchor="end" textLength="23.4" lengthAdjust="spacingAndGlyphs">84897.40</text>
<text x="240.40" y="159.49" font-size="7" fill="#2a2a2a" text-anchor="end" textLength="23.4" lengthAdjust="spacingAndGlyphs">84882.30</text>
<text x="294.70" y="159.49" font-size="7" fill="#2a2a2a" text-anchor="end" textLength="23.4" lengthAdjust="spacingAndGlyphs">84278.49</text>
<text x="413.00" y="159.49" font-size="7" fill="#2a2a2a" text-anchor="end" textLength="51.8" lengthAdjust="spacingAndGlyphs">2025.04.20 23:06:06</text>
<text x="467.10" y="159.49" font-size="7" fill="#2a2a2a" text-anchor="end" textLength="23.4" lengthAdjust="spacingAndGlyphs">84882.30</text>
<text x="520.90" y="159.49" font-size="7" fill="#2a2a2a" text-anchor="end" textLength="19.4" lengthAdjust="spacingAndGlyphs">-317.84</text>
<text x="574.70" y="159.49" font-size="7" fill="#2a2a2a" text-anchor="end" textLength="10.9" lengthAdjust="spacingAndGlyphs">0.00</text>
<text x="36.40" y="170.12" font-size="7" fill="#2a2a2a" text-anchor="end" textLength="8.5" lengthAdjust="spacingAndGlyphs">sell</text>
<text x="79.40" y="170.12" font-size="7" fill="#2a2a2a" text-anchor="end" textLength="14.0" lengthAdjust="spacingAndGlyphs">79.54</text>
<text x="133.70" y="170.12" font-size="7" fill="#2a2a2a" text-anchor="end" textLength="22.8" lengthAdjust="spacingAndGlyphs">btcusdp</text>
<text x="186.80" y="170.12" font-size="7" fill="#2a2a2a" text-anchor="end" textLength="23.4" lengthAdjust="spacingAndGlyphs">84887.40</text>
<text x="240.40" y="170.12" font-size="7" fill="#2a2a2a" text-anchor="end" textLength="23.4" lengthAdjust="spacingAndGlyphs">84874.30</text>
<text x="294.70" y="170.12" font-size="7" fill="#2a2a2a" text-anchor="end" textLength="23.4" lengthAdjust="spacingAndGlyphs">84270.49</text>
<text x="413.00" y="170.12" font-size="7" fill="#2a2a2a" text-anchor="end" textLength="51.8" lengthAdjust="spacingAndGlyphs">2025.04.20 23:06:15</text>
<text x="467.10" y="170.12" font-size="7" fill="#2a2a2a" text-anchor="end" textLength="23.4" lengthAdjust="spacingAndGlyphs">84874.30</text>
<text x="520.90" y="170.12" font-size="7" fill="#2a2a2a" text-anchor="end" textLength="19.4" lengthAdjust="spacingAndGlyphs">-318.16</text>
<text x="574.70" y="170.12" font-size="7" fill="#2a2a2a" text-anchor="end" textLength="10.9" lengthAdjust="spacingAndGlyphs">0.00</text>
<text x="36.40" y="180.75" font-size="7" fill="#2a2a2a" text-anchor="end" textLength="8.5" lengthAdjust="spacingAndGlyphs">sell</text>
<text x="79.40" y="180.75" font-size="7" fill="#2a2a2a" text-anchor="end" textLength="14.0" lengthAdjust="spacingAndGlyphs">79.55</text>
<text x="133.70" y="180.75" font-size="7" fill="#2a2a2a" text-anchor="end" textLength="22.8" lengthAdjust="spacingAndGlyphs">btcusdp</text>
<text x="186.80" y="180.75" font-size="7" fill="#2a2a2a" text-anchor="end" textLength="23.4" lengthAdjust="spacingAndGlyphs">84886.40</text>
<text x="240.40" y="180.75" font-size="7" fill="#2a2a2a" text-anchor="end" textLength="23.4" lengthAdjust="spacingAndGlyphs">84828.20</text>
<text x="294.70" y="180.75" font-size="7" fill="#2a2a2a" text-anchor="end" textLength="23.4" lengthAdjust="spacingAndGlyphs">84224.39</text>
<text x="413.00" y="180.75" font-size="7" fill="#2a2a2a" text-anchor="end" textLength="51.8" lengthAdjust="spacingAndGlyphs">2025.04.20 23:06:52</text>
<text x="467.10" y="180.75" font-size="7" fill="#2a2a2a" text-anchor="end" textLength="23.4" lengthAdjust="spacingAndGlyphs">84828.20</text>
<text x="520.90" y="180.75" font-size="7" fill="#2a2a2a" text-anchor="end" textLength="19.4" lengthAdjust="spacingAndGlyphs">-318.20</text>
<text x="574.70" y="180.75" font-size="7" fill="#2a2a2a" text-anchor="end" textLength="10.9" lengthAdjust="spacingAndGlyphs">0.00</text>
<text x="36.40" y="191.38" font-size="7" fill="#2a2a2a" text-anchor="end" textLength="8.5" lengthAdjust="spacingAndGlyphs">sell</text>
<text x="79.40" y="191.38" font-size="7" fill="#2a2a2a" text-anchor="end" textLength="14.0" lengthAdjust="spacingAndGlyphs">79.61</text>
<text x="133.70" y="191.38" font-size="7" fill="#2a2a2a" text-anchor="end" textLength="22.8" lengthAdjust="spacingAndGlyphs">btcusdp</text>
<text x="186.80" y="191.38" font-size="7" fill="#2a2a2a" text-anchor="end" textLength="23.4" lengthAdjust="spacingAndGlyphs">84874.00</text>
<text x="240.40" y="191.38" font-size="7" fill="#2a2a2a" text-anchor="end" textLength="23.4" lengthAdjust="spacingAndGlyphs">84877.80</text>
<text x="294.70" y="191.38" font-size="7" fill="#2a2a2a" text-anchor="end" textLength="23.4" lengthAdjust="spacingAndGlyphs">84274.00</text>
<text x="413.00" y="191.38" font-size="7" fill="#2a2a2a" text-anchor="end" textLength="51.8" lengthAdjust="spacingAndGlyphs">2025.04.20 23:06:16</text>
<text x="467.10" y="191.38" font-size="7" fill="#2a2a2a" text-anchor="end" textLength="23.4" lengthAdjust="spacingAndGlyphs">84877.80</text>
<text x="520.90" y="191.38" font-size="7" fill="#2a2a2a" text-anchor="end" textLength="19.4" lengthAdjust="spacingAndGlyphs">-318.44</text>
<text x="574.70" y="191.38" font-size="7" fill="#2a2a2a" text-anchor="end" textLength="10.9" lengthAdjust="spacingAndGlyphs">0.00</text>
<text x="36.40" y="202.01" font-size="7" fill="#2a2a2a" text-anchor="end" textLength="8.5" lengthAdjust="spacingAndGlyphs">sell</text>
<text x="79.40" y="202.01" font-size="7" fill="#2a2a2a" text-anchor="end" textLength="14.0" lengthAdjust="spacingAndGlyphs">79.98</text>
<text x="133.70" y="202.01" font-size="7" fill="#2a2a2a" text-anchor="end" textLength="22.8" lengthAdjust="spacingAndGlyphs">btcusdp</text>
<text x="186.80" y="202.01" font-size="7" fill="#2a2a2a" text-anchor="end" textLength="23.4" lengthAdjust="spacingAndGlyphs">84866.30</text>
<text x="240.40" y="202.01" font-size="7" fill="#2a2a2a" text-anchor="end" textLength="23.4" lengthAdjust="spacingAndGlyphs">84855.50</text>
<text x="294.70" y="202.01" font-size="7" fill="#2a2a2a" text-anchor="end" textLength="23.4" lengthAdjust="spacingAndGlyphs">84251.69</text>
<text x="413.00" y="202.01" font-size="7" fill="#2a2a2a" text-anchor="end" textLength="51.8" lengthAdjust="spacingAndGlyphs">2025.04.20 23:07:04</text>
<text x="467.10" y="202.01" font-size="7" fill="#2a2a2a" text-anchor="end" textLength="23.4" lengthAdjust="spacingAndGlyphs">84855.50</text>
<text x="520.90" y="202.01" font-size="7" fill="#2a2a2a" text-anchor="end" textLength="19.4" lengthAdjust="spacingAndGlyphs">-319.92</text>
<text x="574.70" y="202.01" font-size="7" fill="#2a2a2a" text-anchor="end" textLength="10.9" lengthAdjust="spacingAndGlyphs">0.00</text>
<text x="36.40" y="212.64" font-size="7" fill="#2a2a2a" text-anchor="end" textLength="8.5" lengthAdjust="spacingAndGlyphs">sell</text>
<text x="79.40" y="212.64" font-size="7" fill="#2a2a2a" text-anchor="end" textLength="14.0" lengthAdjust="spacingAndGlyphs">80.03</text>
<text x="133.70" y="212.64" font-size="7" fill="#2a2a2a" text-anchor="end" textLength="22.8" lengthAdjust="spacingAndGlyphs">btcusdp</text>
<text x="186.80" y="212.64" font-size="7" fill="#2a2a2a" text-anchor="end" textLength="23.4" lengthAdjust="spacingAndGlyphs">84879.30</text>
<text x="240.40" y="212.64" font-size="7" fill="#2a2a2a" text-anchor="end" textLength="23.4" lengthAdjust="spacingAndGlyphs">84851.60</text>
<text x="294.70" y="212.64" font-size="7" fill="#2a2a2a" text-anchor="end" textLength="23.4" lengthAdjust="spacingAndGlyphs">84247.79</text>
<text x="413.00" y="212.64" font-size="7" fill="#2a2a2a" text-anchor="end" textLength="51.8" lengthAdjust="spacingAndGlyphs">2025.04.20 23:07:30</text>
<text x="467.10" y="212.64" font-size="7" fill="#2a2a2a" text-anchor="end" textLength="23.4" lengthAdjust="spacingAndGlyphs">84851.60</text>
<text x="520.90" y="212.64" font-size="7" fill="#2a2a2a" text-anchor="end" textLength="19.4" lengthAdjust="spacingAndGlyphs">-320.12</text>
<text x="574.70" y="212.64" font-size="7" fill="#2a2a2a" text-anchor="end" textLength="10.9" lengthAdjust="spacingAndGlyphs">0.00</text>
<text x="36.40" y="223.27" font-size="7" fill="#2a2a2a" text-anchor="end" textLength="8.5" lengthAdjust="spacingAndGlyphs">sell</text>
<text x="79.40" y="223.27" font-size="7" fill="#2a2a2a" text-anchor="end" textLength="14.0" lengthAdjust="spacingAndGlyphs">80.22</text>
<text x="133.70" y="223.27" font-size="7" fill="#2a2a2a" text-anchor="end" textLength="22.8" lengthAdjust="spacingAndGlyphs">btcusdp</text>
<text x="186.80" y="223.27" font-size="7" fill="#2a2a2a" text-anchor="end" textLength="23.4" lengthAdjust="spacingAndGlyphs">84884.50</text>
<text x="240.40" y="223.27" font-size="7" fill="#2a2a2a" text-anchor="end" textLength="23.4" lengthAdjust="spacingAndGlyphs">84870.70</text>
<text x="294.70" y="223.27" font-size="7" fill="#2a2a2a" text-anchor="end" textLength="23.4" lengthAdjust="spacingAndGlyphs">84266.89</text>
<text x="413.00" y="223.27" font-size="7" fill="#2a2a2a" text-anchor="end" textLength="51.8" lengthAdjust="spacingAndGlyphs">2025.04.20 23:07:46</text>
<text x="467.10" y="223.27" font-size="7" fill="#2a2a2a" text-anchor="end" textLength="23.4" lengthAdjust="spacingAndGlyphs">84870.70</text>
<text x="520.90" y="223.27" font-size="7" fill="#2a2a2a" text-anchor="end" textLength="19.4" lengthAdjust="spacingAndGlyphs">-320.88</text>
<text x="574.70" y="223.27" font-size="7" fill="#2a2a2a" text-anchor="end" textLength="10.9" lengthAdjust="spacingAndGlyphs">0.00</text>
<text x="36.40" y="233.90" font-size="7" fill="#2a2a2a" text-anchor="end" textLength="8.5" lengthAdjust="spacingAndGlyphs">sell</text>
<text x="79.40" y="233.90" font-size="7" fill="#2a2a2a" text-anchor="end" textLength="14.0" lengthAdjust="spacingAndGlyphs">80.29</text>
<text x="133.70" y="233.90" font-size="7" fill="#2a2a2a" text-anchor="end" textLength="22.8" lengthAdjust="spacingAndGlyphs">btcusdp</text>
<text x="186.80" y="233.90" font-size="7" fill="#2a2a2a" text-anchor="end" textLength="23.4" lengthAdjust="spacingAndGlyphs">84890.20</text>
<text x="240.40" y="233.90" font-size="7" fill="#2a2a2a" text-anchor="end" textLength="23.4" lengthAdjust="spacingAndGlyphs">84882.70</text>
<text x="294.70" y="233.90" font-size="7" fill="#2a2a2a" text-anchor="end" textLength="23.4" lengthAdjust="spacingAndGlyphs">84278.89</text>
<text x="413.00" y="233.90" font-size="7" fill="#2a2a2a" text-anchor="end" textLength="51.8" lengthAdjust="spacingAndGlyphs">2025.04.20 23:07:58</text>
<text x="467.10" y="233.90" font-size="7" fill="#2a2a2a" text-anchor="end" textLength="23.4" lengthAdjust="spacingAndGlyphs">84882.70</text>
<text x="520.90" y="233.90" font-size="7" fill="#2a2a2a" text-anchor="end" textLength="19.4" lengthAdjust="spacingAndGlyphs">-321.16</text>
<text x="574.70" y="233.90" font-size="7" fill="#2a2a2a" text-anchor="end" textLength="10.9" lengthAdjust="spacingAndGlyphs">0.00</text>
<text x="36.40" y="244.53" font-size="7" fill="#2a2a2a" text-anchor="end" textLength="8.5" lengthAdjust="spacingAndGlyphs">sell</text>
<text x="79.40" y="244.53" font-size="7" fill="#2a2a2a" text-anchor="end" textLength="14.0" lengthAdjust="spacingAndGlyphs">80.32</text>
<text x="133.70" y="244.53" font-size="7" fill="#2a2a2a" text-anchor="end" textLength="22.8" lengthAdjust="spacingAndGlyphs">btcusdp</text>
<text x="186.80" y="244.53" font-size="7" fill="#2a2a2a" text-anchor="end" textLength="23.4" lengthAdjust="spacingAndGlyphs">84870.80</text>
<text x="240.40" y="244.53" font-size="7" fill="#2a2a2a" text-anchor="end" textLength="23.4" lengthAdjust="spacingAndGlyphs">84845.60</text>
<text x="294.70" y="244.53" font-size="7" fill="#2a2a2a" text-anchor="end" textLength="23.4" lengthAdjust="spacingAndGlyphs">84241.79</text>
<text x="413.00" y="244.53" font-size="7" fill="#2a2a2a" text-anchor="end" textLength="51.8" lengthAdjust="spacingAndGlyphs">2025.04.20 23:09:08</text>
<text x="467.10" y="244.53" font-size="7" fill="#2a2a2a" text-anchor="end" textLength="23.4" lengthAdjust="spacingAndGlyphs">84845.60</text>
<text x="520.90" y="244.53" font-size="7" fill="#2a2a2a" text-anchor="end" textLength="19.4" lengthAdjust="spacingAndGlyphs">-321.28</text>
<text x="574.70" y="244.53" font-size="7" fill="#2a2a2a" text-anchor="end" textLength="10.9" lengthAdjust="spacingAndGlyphs">0.00</text>
<text x="36.40" y="255.16" font-size="7" fill="#2a2a2a" text-anchor="end" textLength="8.5" lengthAdjust="spacingAndGlyphs">sell</text>
<text x="79.40" y="255.16" font-size="7" fill="#2a2a2a" text-anchor="end" textLength="14.0" lengthAdjust="spacingAndGlyphs">80.32</text>
<text x="133.70" y="255.16" font-size="7" fill="#2a2a2a" text-anchor="end" textLength="22.8" lengthAdjust="spacingAndGlyphs">btcusdp</text>
<text x="186.80" y="255.16" font-size="7" fill="#2a2a2a" text-anchor="end" textLength="23.4" lengthAdjust="spacingAndGlyphs">84880.40</text>
<text x="240.40" y="255.16" font-size="7" fill="#2a2a2a" text-anchor="end" textLength="23.4" lengthAdjust="spacingAndGlyphs">84871.60</text>
<text x="294.70" y="255.16" font-size="7" fill="#2a2a2a" text-anchor="end" textLength="23.4" lengthAdjust="spacingAndGlyphs">84267.79</text>
<text x="413.00" y="255.16" font-size="7" fill="#2a2a2a" text-anchor="end" textLength="51.8" lengthAdjust="spacingAndGlyphs">2025.04.20 23:08:25</text>
<text x="467.10" y="255.16" font-size="7" fill="#2a2a2a" text-anchor="end" textLength="23.4" lengthAdjust="spacingAndGlyphs">84871.60</text>
<text x="520.90" y="255.16" font-size="7" fill="#2a2a2a" text-anchor="end" textLength="19.4" lengthAdjust="spacingAndGlyphs">-321.28</text>
<text x="574.70" y="255.16" font-size="7" fill="#2a2a2a" text-anchor="end" textLength="10.9" lengthAdjust="spacingAndGlyphs">0.00</text>
<text x="36.40" y="265.79" font-size="7" fill="#2a2a2a" text-anchor="end" textLength="8.5" lengthAdjust="spacingAndGlyphs">sell</text>
<text x="79.40" y="265.79" font-size="7" fill="#2a2a2a" text-anchor="end" textLength="14.0" lengthAdjust="spacingAndGlyphs">80.36</text>
<text x="133.70" y="265.79" font-size="7" fill="#2a2a2a" text-anchor="end" textLength="22.8" lengthAdjust="spacingAndGlyphs">btcusdp</text>
<text x="186.80" y="265.79" font-size="7" fill="#2a2a2a" text-anchor="end" textLength="23.4" lengthAdjust="spacingAndGlyphs">84875.80</text>
<text x="240.40" y="265.79" font-size="7" fill="#2a2a2a" text-anchor="end" textLength="23.4" lengthAdjust="spacingAndGlyphs">84877.00</text>
<text x="294.70" y="265.79" font-size="7" fill="#2a2a2a" text-anchor="end" textLength="23.4" lengthAdjust="spacingAndGlyphs">84273.19</text>
<text x="413.00" y="265.79" font-size="7" fill="#2a2a2a" text-anchor="end" textLength="51.8" lengthAdjust="spacingAndGlyphs">2025.04.20 23:08:57</text>
<text x="467.10" y="265.79" font-size="7" fill="#2a2a2a" text-anchor="end" textLength="23.4" lengthAdjust="spacingAndGlyphs">84877.00</text>
<text x="520.90" y="265.79" font-size="7" fill="#2a2a2a" text-anchor="end" textLength="19.4" lengthAdjust="spacingAndGlyphs">-321.44</text>
<text x="574.70" y="265.79" font-size="7" fill="#2a2a2a" text-anchor="end" textLength="10.9" lengthAdjust="spacingAndGlyphs">0.00</text>
<text x="36.40" y="276.42" font-size="7" fill="#2a2a2a" text-anchor="end" textLength="8.5" lengthAdjust="spacingAndGlyphs">sell</text>
<text x="79.40" y="276.42" font-size="7" fill="#2a2a2a" text-anchor="end" textLength="14.0" lengthAdjust="spacingAndGlyphs">80.48</text>
<text x="133.70" y="276.42" font-size="7" fill="#2a2a2a" text-anchor="end" textLength="22.8" lengthAdjust="spacingAndGlyphs">btcusdp</text>
<text x="186.80" y="276.42" font-size="7" fill="#2a2a2a" text-anchor="end" textLength="23.4" lengthAdjust="spacingAndGlyphs">84886.00</text>
<text x="240.40" y="276.42" font-size="7" fill="#2a2a2a" text-anchor="end" textLength="23.4" lengthAdjust="spacingAndGlyphs">84873.00</text>
<text x="294.70" y="276.42" font-size="7" fill="#2a2a2a" text-anchor="end" textLength="23.4" lengthAdjust="spacingAndGlyphs">84269.19</text>
<text x="413.00" y="276.42" font-size="7" fill="#2a2a2a" text-anchor="end" textLength="51.8" lengthAdjust="spacingAndGlyphs">2025.04.20 23:09:50</text>
<text x="467.10" y="276.42" font-size="7" fill="#2a2a2a" text-anchor="end" textLength="23.4" lengthAdjust="spacingAndGlyphs">84873.00</text>
<text x="520.90" y="276.42" font-size="7" fill="#2a2a2a" text-anchor="end" textLength="19.4" lengthAdjust="spacingAndGlyphs">-321.92</text>
<text x="574.70" y="276.42" font-size="7" fill="#2a2a2a" text-anchor="end" textLength="10.9" lengthAdjust="spacingAndGlyphs">0.00</text>
</svg>
</div>
<div class="tabs">
<svg width="600" height="12" viewBox="0 0 600 12" style="position:absolute;left:0;top:0;display:block" font-family='"Liberation Sans", sans-serif'>
<rect x="6.25" y="1.00" width="0.9" height="6.6" fill="#848484"/>
<rect x="45.75" y="1.00" width="0.9" height="6.6" fill="#848484"/>
<rect x="76.95" y="1.00" width="0.9" height="6.6" fill="#848484"/>
<rect x="116.75" y="1.00" width="0.9" height="6.6" fill="#848484"/>
<rect x="147.95" y="1.00" width="0.9" height="6.6" fill="#848484"/>
<rect x="179.55" y="1.00" width="0.9" height="6.6" fill="#848484"/>
<text x="12.1" y="6.00" font-size="6.6" fill="#7a7a7e" textLength="19.4" lengthAdjust="spacingAndGlyphs">Market</text>
<text x="51.8" y="6.00" font-size="6.6" fill="#7a7a7e" textLength="20.0" lengthAdjust="spacingAndGlyphs">Articles</text>
<text x="83.4" y="6.00" font-size="6.6" fill="#7a7a7e" textLength="28.8" lengthAdjust="spacingAndGlyphs">Code Base</text>
<text x="122.8" y="6.00" font-size="6.6" fill="#7a7a7e" textLength="20.4" lengthAdjust="spacingAndGlyphs">Experts</text>
<text x="154.1" y="6.00" font-size="6.6" fill="#7a7a7e" textLength="19.8" lengthAdjust="spacingAndGlyphs">Journal</text>
<text x="33" y="8.00" font-size="4.5" font-weight="bold" fill="#f03030" textLength="8" lengthAdjust="spacingAndGlyphs">123</text>
<text x="-1.2" y="7.80" font-size="4.8" font-weight="bold" fill="#f03030">4</text>
</svg></div>
<div class="status">
<svg width="600" height="12" viewBox="0 0 600 12" style="position:absolute;left:0;top:0;display:block" font-family='"Liberation Sans", sans-serif'>
<rect x="442.10" y="1.20" width="0.8" height="9.6" fill="#c6c6c6"/>
<rect x="502.60" y="1.20" width="0.8" height="9.6" fill="#c6c6c6"/>
<rect x="558.30" y="1.20" width="0.8" height="9.6" fill="#c6c6c6"/>
<rect x="595.90" y="1.20" width="0.8" height="9.6" fill="#c6c6c6"/>
<text x="445.6" y="9.20" font-size="6.5" fill="#2a2a2a" textLength="19.4" lengthAdjust="spacingAndGlyphs">Default</text>
<text x="507.1" y="9.20" font-size="6.5" fill="#2a2a2a" textLength="44.6" lengthAdjust="spacingAndGlyphs">2025.04.21 02:30</text>
<text x="561.9" y="9.20" font-size="6.5" fill="#2a2a2a" textLength="31.6" lengthAdjust="spacingAndGlyphs">O: 85047.20</text>
<text x="598.3" y="9.20" font-size="6.5" fill="#b06030">H</text>
</svg></div>
<div class="botline"></div><div class="botseg"></div>
</body></html>
